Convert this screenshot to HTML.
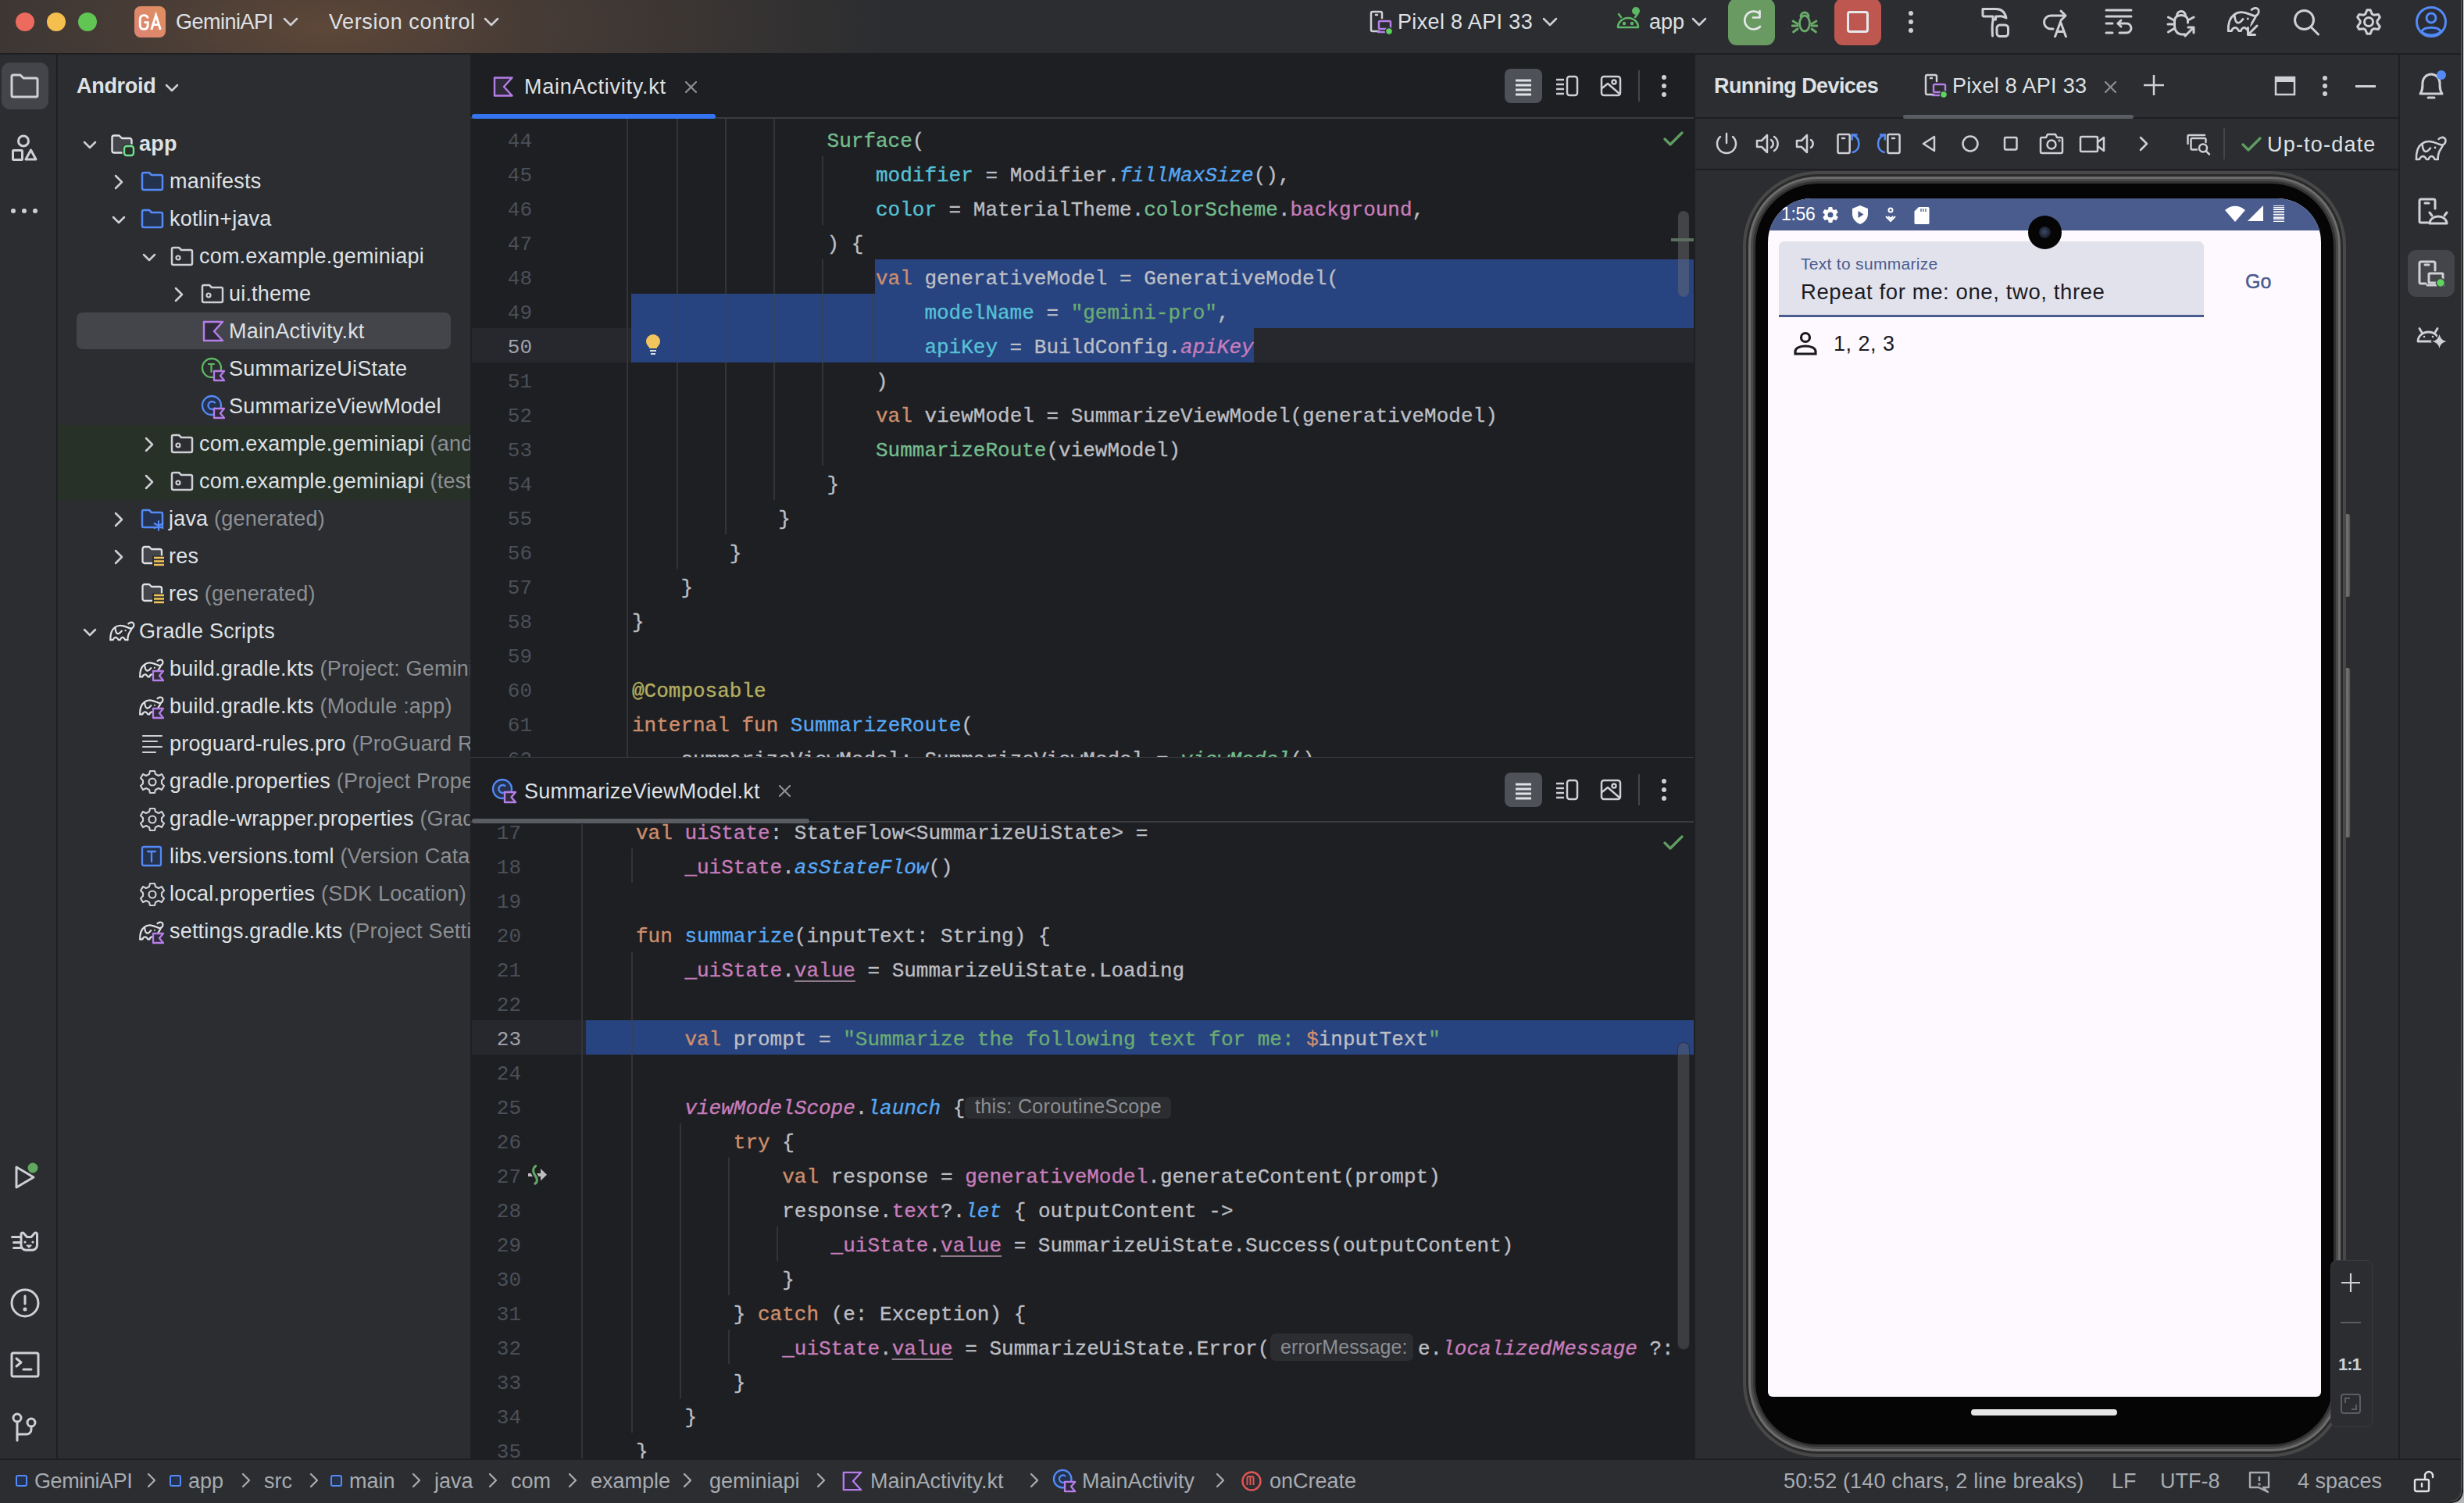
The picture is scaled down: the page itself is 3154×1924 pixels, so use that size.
<!DOCTYPE html><html><head><meta charset="utf-8"><style>html,body{margin:0;padding:0}body{width:3154px;height:1924px;overflow:hidden;position:relative;background:#2b2d30;font-family:"Liberation Sans",sans-serif}.u{text-decoration:underline;text-underline-offset:5px;text-decoration-thickness:2px;text-decoration-color:#8f7a8c}</style></head><body>
<div style="position:absolute;left:0;top:0;width:3154px;height:68px;background:#2b2d30"></div>
<div style="position:absolute;left:0;top:0;width:1300px;height:68px;background:radial-gradient(ellipse 720px 260px at 420px 34px, rgba(110,80,60,0.75) 0%, rgba(95,72,58,0.55) 35%, rgba(43,45,48,0) 100%)"></div>
<div style="position:absolute;left:0px;top:68px;width:3154px;height:2px;background:#1e1f22;"></div>
<div style="position:absolute;left:20px;top:16px;width:24px;height:24px;border-radius:50%;background:#ed6a5e"></div>
<div style="position:absolute;left:60px;top:16px;width:24px;height:24px;border-radius:50%;background:#f4bf4f"></div>
<div style="position:absolute;left:100px;top:16px;width:24px;height:24px;border-radius:50%;background:#61c554"></div>
<div style="position:absolute;left:172px;top:8px;width:40px;height:40px;border-radius:8px;background:linear-gradient(45deg,#dd8374,#e08f5f)"></div>
<svg style="position:absolute;left:0;top:0" width="220" height="60" viewBox="0 0 220 60" fill="none" stroke="#ffffff" stroke-width="2.9" stroke-linecap="butt" stroke-linejoin="miter"><path d="M189.2 23.5 C188.8 20.5 187 19.6 184.2 19.6 C180.6 19.6 179.2 21.8 179.2 25.5 V32 C179.2 35.8 180.6 37.4 184.2 37.4 C187.8 37.4 189.2 35.8 189.2 32 V28.6 H184.4"/><path d="M193.8 38 L199.6 19.4 L205.4 38 M195.8 31.6 H203.4"/></svg>
<div style="position:absolute;left:225px;top:12.44px;height:32.4px;line-height:32.4px;font-size:27px;color:#dfe1e5;font-weight:normal;white-space:pre;font-family:'Liberation Sans', sans-serif;letter-spacing:-0.5px">GeminiAPI</div>
<svg style="position:absolute;left:362px;top:22.0px" width="20" height="12.0" viewBox="-2 -2 20 12.0"><path d="M0 0 L8.0 8.0 L16 0" fill="none" stroke="#ced0d6" stroke-width="2.5" stroke-linecap="round" stroke-linejoin="round"/></svg>
<div style="position:absolute;left:421px;top:12.44px;height:32.4px;line-height:32.4px;font-size:27px;color:#dfe1e5;font-weight:normal;white-space:pre;font-family:'Liberation Sans', sans-serif;letter-spacing:0.6px">Version control</div>
<svg style="position:absolute;left:619px;top:22.0px" width="20" height="12.0" viewBox="-2 -2 20 12.0"><path d="M0 0 L8.0 8.0 L16 0" fill="none" stroke="#ced0d6" stroke-width="2.5" stroke-linecap="round" stroke-linejoin="round"/></svg>
<svg style="position:absolute;left:1753px;top:13px" width="30" height="32" viewBox="0 0 30 32" fill="none" stroke-linecap="round" stroke-linejoin="round"><path d="M12 27 H4 a2 2 0 0 1 -2 -2 V4 a2 2 0 0 1 2 -2 H14 a2 2 0 0 1 2 2 V10" stroke="#ced0d6" stroke-width="2.5"/><path d="M8 6 H10" stroke="#ced0d6" stroke-width="2.5"/><rect x="12" y="14" width="15" height="10" rx="1.5" stroke="#b57ee8" stroke-width="2.5"/><path d="M11 28 H27" stroke="#b57ee8" stroke-width="2.5"/><circle cx="25" cy="27" r="4.5" fill="#5fd35f" stroke="#2b2d30" stroke-width="1.5"/></svg>
<div style="position:absolute;left:1789px;top:12.44px;height:32.4px;line-height:32.4px;font-size:27px;color:#dfe1e5;font-weight:normal;white-space:pre;font-family:'Liberation Sans', sans-serif;letter-spacing:0.35px">Pixel 8 API 33</div>
<svg style="position:absolute;left:1974px;top:22.0px" width="20" height="12.0" viewBox="-2 -2 20 12.0"><path d="M0 0 L8.0 8.0 L16 0" fill="none" stroke="#ced0d6" stroke-width="2.5" stroke-linecap="round" stroke-linejoin="round"/></svg>
<svg style="position:absolute;left:2068px;top:8px" width="32" height="34" viewBox="0 0 32 34" fill="none" stroke="#5fb865" stroke-width="2.5" stroke-linecap="round" stroke-linejoin="round"><path d="M3 27 a13 12 0 0 1 26 0 Z"/><path d="M7 14 L4 10"/><path d="M25 14 L28 10"/><circle cx="11" cy="22" r="1" fill="#5fb865"/><circle cx="21" cy="22" r="1" fill="#5fb865"/><circle cx="26" cy="6" r="5" fill="#5fb865" stroke="none"/></svg>
<div style="position:absolute;left:2111px;top:12.44px;height:32.4px;line-height:32.4px;font-size:27px;color:#dfe1e5;font-weight:normal;white-space:pre;font-family:'Liberation Sans', sans-serif;">app</div>
<svg style="position:absolute;left:2165px;top:22.0px" width="20" height="12.0" viewBox="-2 -2 20 12.0"><path d="M0 0 L8.0 8.0 L16 0" fill="none" stroke="#ced0d6" stroke-width="2.5" stroke-linecap="round" stroke-linejoin="round"/></svg>
<div style="position:absolute;left:2212px;top:-2px;width:60px;height:60px;border-radius:11px;background:#689a62"></div>
<svg style="position:absolute;left:2222px;top:8px" width="40" height="40" viewBox="0 0 40 40" fill="none" stroke="#e8e8ea" stroke-width="2.6" stroke-linecap="round" stroke-linejoin="round"><path d="M30.5 9.5 A11.5 11.5 0 1 0 31 26"/><path d="M22 14.5 H30.5 V6"/></svg>
<svg style="position:absolute;left:2293px;top:11px" width="34" height="34" viewBox="0 0 34 34" fill="none" stroke="#6aab6a" stroke-width="2.8" stroke-linecap="round" stroke-linejoin="round"><ellipse cx="17" cy="19" rx="6.5" ry="10"/><path d="M12 10 a5 5 0 0 1 10 0"/><path d="M2 16 L8 19.5"/><path d="M32 16 L26 19.5"/><path d="M1 22 H8"/><path d="M33 22 H26"/><path d="M2.5 30 L8 26"/><path d="M31.5 30 L26 26"/></svg>
<div style="position:absolute;left:2348px;top:-2px;width:60px;height:60px;border-radius:11px;background:#bd5750"></div>
<div style="position:absolute;left:2364px;top:14px;width:22px;height:22px;border:3px solid #e6e9ec;border-radius:4px"></div>
<div style="position:absolute;left:2443px;top:14px;width:6px;height:6px;border-radius:50%;background:#ced0d6"></div>
<div style="position:absolute;left:2443px;top:25px;width:6px;height:6px;border-radius:50%;background:#ced0d6"></div>
<div style="position:absolute;left:2443px;top:36px;width:6px;height:6px;border-radius:50%;background:#ced0d6"></div>
<svg style="position:absolute;left:2533px;top:8px" width="40" height="40" viewBox="0 0 40 40" stroke="#ced0d6" stroke-width="3" fill="none" stroke-linecap="round" stroke-linejoin="round"><path d="M5 3.5 H22 C29 3.5 33.5 8 35 15 C31.5 13 27.5 12.5 25 13 H21.5 V17 H18 V13 H6.5 a1.5 1.5 0 0 1 -1.5 -1.5 Z"/><path d="M18.5 17 C16.5 22 17 30 17.5 38"/><rect x="23" y="24" width="14.5" height="14.5" rx="4"/></svg>
<svg style="position:absolute;left:2613px;top:8px" width="40" height="40" viewBox="0 0 40 40" stroke="#ced0d6" stroke-width="3" fill="none" stroke-linecap="round" stroke-linejoin="round"><path d="M15 29 H12 a8.5 8.5 0 0 1 0 -17 H30"/><path d="M25 6 L31 12 L25 18"/><path d="M17.5 39 L24.5 20 L31.5 39 M20 32.5 H29"/></svg>
<svg style="position:absolute;left:2692px;top:8px" width="40" height="40" viewBox="0 0 40 40" stroke="#ced0d6" stroke-width="3" fill="none" stroke-linecap="round" stroke-linejoin="round"><path d="M4 5 H36 M4 13 H36 M4 22 H12 M4 34 H12"/><path d="M21 34 H30 a6 6 0 0 0 0 -12 H19"/><path d="M23 18 L19 22 L23 26"/></svg>
<svg style="position:absolute;left:2772px;top:8px" width="40" height="40" viewBox="0 0 40 40" stroke="#ced0d6" stroke-width="3" fill="none" stroke-linecap="round" stroke-linejoin="round"><path d="M25 36 H21 C15 36 11.5 31 11.5 25 V19 C11.5 14 15 11.5 20 11.5 C25 11.5 28.5 14 28.5 19 V21"/><path d="M14.5 12 a5.5 5.5 0 0 1 11 0"/><path d="M3.5 14 L10 17.5 M3 23 H10.5 M3.5 33 L11 28.5 M36 14 L29.5 17.5"/><path d="M25 38 L36 27 M29 27 H36 V34"/></svg>
<svg style="position:absolute;left:2844.2px;top:-1.4px" width="57.2" height="52.0" viewBox="0 0 55 50" fill="none" stroke="#ced0d6" stroke-width="2.69" stroke-linecap="round" stroke-linejoin="round"><path d="M8 39 C7.5 29 11 22 15 19 C19 16 24 15.5 28 16.5 C33 17.5 37 20 40 20.5 C43 21 45.5 18 45.5 15 C45.5 12 43 10.5 40.5 11 C39 11.3 37.5 12 36.6 13"/><path d="M42 20.5 C41 24 38 27 37 30 C35.8 33 35.5 36 35.5 39"/><path d="M8 39 H12 C13 35.5 16 34.5 17.5 35.2 C19 36 20 37 21 39 H23.5 C24.5 35.5 27 34.5 28.5 35.2 C30 36 31 37 31.5 39 H35.5"/><path d="M15.5 19.5 C16 24 17 28.5 19.5 29 C22 29.5 24.5 26.5 26 24.5"/><circle cx="32" cy="24" r="1.4" fill="#ced0d6" stroke="none"/></svg>
<svg style="position:absolute;left:2866px;top:24px" width="30" height="28" viewBox="0 0 30 28" fill="none" stroke-linecap="round" stroke-linejoin="round"><path d="M23 8 L11 20" stroke="#2b2d30" stroke-width="9"/><path d="M23 9 L11.5 20.5 M11.5 11.5 V20.5 H20.5" stroke="#ced0d6" stroke-width="3"/></svg>
<svg style="position:absolute;left:2932px;top:8px" width="40" height="40" viewBox="0 0 40 40" stroke="#ced0d6" stroke-width="3" fill="none" stroke-linecap="round" stroke-linejoin="round"><circle cx="17.5" cy="17.5" r="12"/><path d="M26 26.5 L35.5 36"/></svg>
<svg style="position:absolute;left:3012px;top:8px" width="40" height="40" viewBox="0 0 40 40" stroke="#ced0d6" stroke-width="3" fill="none" stroke-linecap="round" stroke-linejoin="round"><path d="M17.98 4.63 L22.02 4.63 L24.21 9.84 L26.70 11.27 L32.30 10.56 L34.32 14.07 L30.91 18.56 L30.91 21.44 L34.32 25.93 L32.30 29.44 L26.70 28.73 L24.21 30.16 L22.02 35.37 L17.98 35.37 L15.79 30.16 L13.30 28.73 L7.70 29.44 L5.68 25.93 L9.09 21.44 L9.09 18.56 L5.68 14.07 L7.70 10.56 L13.30 11.27 L15.79 9.84 Z"/><circle cx="20" cy="20" r="5.5"/></svg>
<svg style="position:absolute;left:3091px;top:7px" width="42" height="42" viewBox="0 0 42 42" fill="none" stroke-linecap="round"><circle cx="21" cy="21" r="18.5" stroke="#548af7" stroke-width="3"/><circle cx="21" cy="16" r="6" fill="#25324d" stroke="#548af7" stroke-width="3"/><path d="M8.5 33.5 C12 26.5 30 26.5 33.5 33.5 C27 39.5 15 39.5 8.5 33.5 Z" fill="#25324d" stroke="#548af7" stroke-width="3"/></svg>
<div style="position:absolute;left:0px;top:70px;width:72px;height:1798px;background:#2b2d30;"></div>
<div style="position:absolute;left:72px;top:70px;width:2px;height:1798px;background:#1e1f22;"></div>
<div style="position:absolute;left:2px;top:80px;width:60px;height:60px;border-radius:11px;background:#43454a"></div>
<svg style="position:absolute;left:12.0px;top:90.0px" width="40" height="40" viewBox="0 0 40 40" stroke="#ced0d6" stroke-width="3" fill="none" stroke-linecap="round" stroke-linejoin="round"><path d="M3 8 a2 2 0 0 1 2 -2 H14 L18 10 H34 a2 2 0 0 1 2 2 V32 a2 2 0 0 1 -2 2 H5 a2 2 0 0 1 -2 -2 Z"/></svg>
<svg style="position:absolute;left:12.0px;top:171.0px" width="40" height="40" viewBox="0 0 40 40" stroke="#ced0d6" stroke-width="3" fill="none" stroke-linecap="round" stroke-linejoin="round"><circle cx="18" cy="9.5" r="6.5"/><rect x="4.5" y="21.5" width="12" height="12" rx="1"/><path d="M21 33 L27.5 21 L34 33 Z"/></svg>
<div style="position:absolute;left:14px;top:267px;width:6px;height:6px;border-radius:50%;background:#ced0d6"></div>
<div style="position:absolute;left:28px;top:267px;width:6px;height:6px;border-radius:50%;background:#ced0d6"></div>
<div style="position:absolute;left:42px;top:267px;width:6px;height:6px;border-radius:50%;background:#ced0d6"></div>
<svg style="position:absolute;left:12.0px;top:1487.0px" width="40" height="40" viewBox="0 0 40 40" stroke="#ced0d6" stroke-width="3" fill="none" stroke-linecap="round" stroke-linejoin="round"><path d="M9 7 L31 20 L9 33 Z"/><circle cx="30" cy="8" r="6.5" fill="#5fa85e" stroke="none"/></svg>
<svg style="position:absolute;left:12.0px;top:1570.0px" width="40" height="40" viewBox="0 0 40 40" stroke="#ced0d6" stroke-width="3" fill="none" stroke-linecap="round" stroke-linejoin="round"><path d="M15 24 V9.8 a1.8 1.8 0 0 1 3.1 -1.3 L22.5 13.6 H28 L32.4 8.5 a1.8 1.8 0 0 1 3.1 1.3 V24 a6.2 6.2 0 0 1 -6.2 6.2 H21.2 a6.2 6.2 0 0 1 -6.2 -6.2 Z"/><path d="M3.5 13.5 H14 M5.5 20.5 H14 M5.5 27.5 H14"/><circle cx="20" cy="20" r="1.6" fill="#ced0d6" stroke="none"/><circle cx="30" cy="20" r="1.6" fill="#ced0d6" stroke="none"/><path d="M22.3 24.3 H28 L25.15 26.8 Z" fill="#ced0d6" stroke-width="1.5"/></svg>
<svg style="position:absolute;left:12.0px;top:1648.0px" width="40" height="40" viewBox="0 0 40 40" stroke="#ced0d6" stroke-width="3" fill="none" stroke-linecap="round" stroke-linejoin="round"><circle cx="20" cy="20" r="17"/><path d="M20 11 V21"/><circle cx="20" cy="28" r="1" fill="#ced0d6"/></svg>
<svg style="position:absolute;left:12.0px;top:1727.0px" width="40" height="40" viewBox="0 0 40 40" stroke="#ced0d6" stroke-width="3" fill="none" stroke-linecap="round" stroke-linejoin="round"><rect x="3" y="5" width="34" height="30" rx="2"/><path d="M9 12 L15 17 L9 22"/><path d="M18 26 H28"/></svg>
<svg style="position:absolute;left:12.0px;top:1807.0px" width="40" height="40" viewBox="0 0 40 40" stroke="#ced0d6" stroke-width="3" fill="none" stroke-linecap="round" stroke-linejoin="round"><circle cx="10" cy="8" r="5"/><circle cx="28" cy="14" r="5"/><path d="M10 13 V37"/><path d="M10 29 H22 a6 6 0 0 0 6 -6 V19"/></svg>
<div style="position:absolute;left:74px;top:70px;width:528px;height:1798px;background:#2b2d30;"></div>
<div style="position:absolute;left:98px;top:94.44px;height:32.4px;line-height:32.4px;font-size:27px;color:#dfe1e5;font-weight:bold;white-space:pre;font-family:'Liberation Sans', sans-serif;letter-spacing:-0.3px">Android</div>
<svg style="position:absolute;left:211px;top:107px" width="20" height="12" viewBox="0 0 20 12"><path d="M2 2 L9 9 L16 2" fill="none" stroke="#ced0d6" stroke-width="2.5" stroke-linecap="round" stroke-linejoin="round"/></svg>
<div style="position:absolute;left:74px;top:544px;width:528px;height:96px;background:#273128;"></div>
<div style="position:absolute;left:98px;top:400px;width:479px;height:47px;border-radius:8px;background:#43454a"></div>
<svg style="position:absolute;left:106px;top:180px" width="20" height="12" viewBox="0 0 20 12"><path d="M2 2 L9 9 L16 2" fill="none" stroke="#ced0d6" stroke-width="2.5" stroke-linecap="round" stroke-linejoin="round"/></svg>
<svg style="position:absolute;left:140px;top:170px" width="34" height="32" viewBox="0 0 34 32" fill="none" stroke-linecap="butt" stroke-linejoin="round"><path d="M3.5 6 a2.5 2.5 0 0 1 2.5 -2.5 H12.5 L16 7 H26 a2.5 2.5 0 0 1 2.5 2.5 V23 a2.5 2.5 0 0 1 -2.5 2.5 H6 a2.5 2.5 0 0 1 -2.5 -2.5 Z" fill="#43454a"/><path d="M18 25.5 H6 a2.5 2.5 0 0 1 -2.5 -2.5 V6 a2.5 2.5 0 0 1 2.5 -2.5 H12.5 L16 7 H26 a2.5 2.5 0 0 1 2.5 2.5 V16.5" stroke="#dfe1e5" stroke-width="2.4"/><rect x="19" y="17" width="12" height="12" rx="3.2" fill="#263029" stroke="#2b2d30" stroke-width="5"/><rect x="19" y="17" width="12" height="12" rx="3.2" fill="#263029" stroke="#73e08f" stroke-width="2.4"/></svg>
<div style="position:absolute;left:178px;top:168.44px;height:32.4px;line-height:32.4px;font-size:27px;color:#dfe1e5;font-weight:normal;white-space:pre;font-family:'Liberation Sans', sans-serif;letter-spacing:0.2px"><b style="font-weight:bold">app</b></div>
<svg style="position:absolute;left:146px;top:223px" width="12" height="20" viewBox="0 0 12 20"><path d="M2 2 L10 10 L2 18" fill="none" stroke="#ced0d6" stroke-width="2.5" stroke-linecap="round" stroke-linejoin="round"/></svg>
<svg style="position:absolute;left:180px;top:217.0px" width="32" height="32" viewBox="0 0 32 32" fill="none" stroke-linecap="round" stroke-linejoin="round"><path d="M2 6 a2 2 0 0 1 2 -2 H11 L14 7 H26 a2 2 0 0 1 2 2 V24 a2 2 0 0 1 -2 2 H4 a2 2 0 0 1 -2 -2 Z" fill="#25324d" stroke="#548af7" stroke-width="2.5"/></svg>
<div style="position:absolute;left:217px;top:216.44px;height:32.4px;line-height:32.4px;font-size:27px;color:#dfe1e5;font-weight:normal;white-space:pre;font-family:'Liberation Sans', sans-serif;letter-spacing:0.2px">manifests</div>
<svg style="position:absolute;left:143px;top:276px" width="20" height="12" viewBox="0 0 20 12"><path d="M2 2 L9 9 L16 2" fill="none" stroke="#ced0d6" stroke-width="2.5" stroke-linecap="round" stroke-linejoin="round"/></svg>
<svg style="position:absolute;left:180px;top:265.0px" width="32" height="32" viewBox="0 0 32 32" fill="none" stroke-linecap="round" stroke-linejoin="round"><path d="M2 6 a2 2 0 0 1 2 -2 H11 L14 7 H26 a2 2 0 0 1 2 2 V24 a2 2 0 0 1 -2 2 H4 a2 2 0 0 1 -2 -2 Z" fill="#25324d" stroke="#548af7" stroke-width="2.5"/></svg>
<div style="position:absolute;left:217px;top:264.44px;height:32.4px;line-height:32.4px;font-size:27px;color:#dfe1e5;font-weight:normal;white-space:pre;font-family:'Liberation Sans', sans-serif;letter-spacing:0.2px">kotlin+java</div>
<svg style="position:absolute;left:182px;top:324px" width="20" height="12" viewBox="0 0 20 12"><path d="M2 2 L9 9 L16 2" fill="none" stroke="#ced0d6" stroke-width="2.5" stroke-linecap="round" stroke-linejoin="round"/></svg>
<svg style="position:absolute;left:218px;top:313.0px" width="32" height="32" viewBox="0 0 32 32" fill="none" stroke-linecap="round" stroke-linejoin="round"><path d="M2 6 a2 2 0 0 1 2 -2 H11 L14 7 H26 a2 2 0 0 1 2 2 V24 a2 2 0 0 1 -2 2 H4 a2 2 0 0 1 -2 -2 Z" fill="#2b2d30" stroke="#ced0d6" stroke-width="2.5"/><circle cx="10" cy="17" r="2.5" stroke="#ced0d6" stroke-width="2.2"/></svg>
<div style="position:absolute;left:255px;top:312.44px;height:32.4px;line-height:32.4px;font-size:27px;color:#dfe1e5;font-weight:normal;white-space:pre;font-family:'Liberation Sans', sans-serif;letter-spacing:0.2px">com.example.geminiapi</div>
<svg style="position:absolute;left:223px;top:367px" width="12" height="20" viewBox="0 0 12 20"><path d="M2 2 L10 10 L2 18" fill="none" stroke="#ced0d6" stroke-width="2.5" stroke-linecap="round" stroke-linejoin="round"/></svg>
<svg style="position:absolute;left:257px;top:361.0px" width="32" height="32" viewBox="0 0 32 32" fill="none" stroke-linecap="round" stroke-linejoin="round"><path d="M2 6 a2 2 0 0 1 2 -2 H11 L14 7 H26 a2 2 0 0 1 2 2 V24 a2 2 0 0 1 -2 2 H4 a2 2 0 0 1 -2 -2 Z" fill="#2b2d30" stroke="#ced0d6" stroke-width="2.5"/><circle cx="10" cy="17" r="2.5" stroke="#ced0d6" stroke-width="2.2"/></svg>
<div style="position:absolute;left:293px;top:360.44px;height:32.4px;line-height:32.4px;font-size:27px;color:#dfe1e5;font-weight:normal;white-space:pre;font-family:'Liberation Sans', sans-serif;letter-spacing:0.2px">ui.theme</div>
<svg style="position:absolute;left:258px;top:409.0px" width="32" height="32" viewBox="0 0 32 32" fill="none" stroke-linecap="round" stroke-linejoin="round"><path d="M3 3 H27 L16 15 L27 27 H3 Z" fill="#2f2a3a" stroke="#b57ee8" stroke-width="2.5"/></svg>
<div style="position:absolute;left:293px;top:408.44px;height:32.4px;line-height:32.4px;font-size:27px;color:#dfe1e5;font-weight:normal;white-space:pre;font-family:'Liberation Sans', sans-serif;letter-spacing:0.2px">MainActivity.kt</div>
<svg style="position:absolute;left:257px;top:457.0px" width="32" height="32" viewBox="0 0 32 32" fill="none" stroke-linecap="round" stroke-linejoin="round"><circle cx="14" cy="14" r="12" stroke="#5fb865" stroke-width="2.3"/><path d="M10 9 H17 M13.5 9 V19" stroke="#5fb865" stroke-width="2.2"/><path d="M17 18 H30 L25 24 L30 30 H17 Z" fill="#2f2a3a" stroke="#b57ee8" stroke-width="2.3"/></svg>
<div style="position:absolute;left:293px;top:456.44px;height:32.4px;line-height:32.4px;font-size:27px;color:#dfe1e5;font-weight:normal;white-space:pre;font-family:'Liberation Sans', sans-serif;letter-spacing:0.2px">SummarizeUiState</div>
<svg style="position:absolute;left:257px;top:505.0px" width="32" height="32" viewBox="0 0 32 32" fill="none" stroke-linecap="round" stroke-linejoin="round"><circle cx="14" cy="14" r="12" fill="#25324d" stroke="#548af7" stroke-width="2.3"/><path d="M18 10.5 A5 5 0 1 0 18 17.5" stroke="#548af7" stroke-width="2.3"/><path d="M17 18 H30 L25 24 L30 30 H17 Z" fill="#2f2a3a" stroke="#b57ee8" stroke-width="2.3"/></svg>
<div style="position:absolute;left:293px;top:504.44px;height:32.4px;line-height:32.4px;font-size:27px;color:#dfe1e5;font-weight:normal;white-space:pre;font-family:'Liberation Sans', sans-serif;letter-spacing:0.2px">SummarizeViewModel</div>
<svg style="position:absolute;left:185px;top:559px" width="12" height="20" viewBox="0 0 12 20"><path d="M2 2 L10 10 L2 18" fill="none" stroke="#ced0d6" stroke-width="2.5" stroke-linecap="round" stroke-linejoin="round"/></svg>
<svg style="position:absolute;left:218px;top:553.0px" width="32" height="32" viewBox="0 0 32 32" fill="none" stroke-linecap="round" stroke-linejoin="round"><path d="M2 6 a2 2 0 0 1 2 -2 H11 L14 7 H26 a2 2 0 0 1 2 2 V24 a2 2 0 0 1 -2 2 H4 a2 2 0 0 1 -2 -2 Z" fill="#2b2d30" stroke="#ced0d6" stroke-width="2.5"/><circle cx="10" cy="17" r="2.5" stroke="#ced0d6" stroke-width="2.2"/></svg>
<div style="position:absolute;left:255px;top:552.44px;height:32.4px;line-height:32.4px;font-size:27px;color:#dfe1e5;font-weight:normal;white-space:pre;font-family:'Liberation Sans', sans-serif;letter-spacing:0.2px">com.example.geminiapi <span style="color:#8c8f94">(androidTest)</span></div>
<svg style="position:absolute;left:185px;top:607px" width="12" height="20" viewBox="0 0 12 20"><path d="M2 2 L10 10 L2 18" fill="none" stroke="#ced0d6" stroke-width="2.5" stroke-linecap="round" stroke-linejoin="round"/></svg>
<svg style="position:absolute;left:218px;top:601.0px" width="32" height="32" viewBox="0 0 32 32" fill="none" stroke-linecap="round" stroke-linejoin="round"><path d="M2 6 a2 2 0 0 1 2 -2 H11 L14 7 H26 a2 2 0 0 1 2 2 V24 a2 2 0 0 1 -2 2 H4 a2 2 0 0 1 -2 -2 Z" fill="#2b2d30" stroke="#ced0d6" stroke-width="2.5"/><circle cx="10" cy="17" r="2.5" stroke="#ced0d6" stroke-width="2.2"/></svg>
<div style="position:absolute;left:255px;top:600.44px;height:32.4px;line-height:32.4px;font-size:27px;color:#dfe1e5;font-weight:normal;white-space:pre;font-family:'Liberation Sans', sans-serif;letter-spacing:0.2px">com.example.geminiapi <span style="color:#8c8f94">(test)</span></div>
<svg style="position:absolute;left:146px;top:655px" width="12" height="20" viewBox="0 0 12 20"><path d="M2 2 L10 10 L2 18" fill="none" stroke="#ced0d6" stroke-width="2.5" stroke-linecap="round" stroke-linejoin="round"/></svg>
<svg style="position:absolute;left:180px;top:649.0px" width="32" height="32" viewBox="0 0 32 32" fill="none" stroke-linecap="round" stroke-linejoin="round"><path d="M2 6 a2 2 0 0 1 2 -2 H11 L14 7 H26 a2 2 0 0 1 2 2 V24 a2 2 0 0 1 -2 2 H4 a2 2 0 0 1 -2 -2 Z" fill="#25324d" stroke="#548af7" stroke-width="2.5"/><path d="M23 18 V30 M17.5 21 L28.5 27 M17.5 27 L28.5 21" stroke="#548af7" stroke-width="2"/></svg>
<div style="position:absolute;left:216px;top:648.44px;height:32.4px;line-height:32.4px;font-size:27px;color:#dfe1e5;font-weight:normal;white-space:pre;font-family:'Liberation Sans', sans-serif;letter-spacing:0.2px">java <span style="color:#8c8f94">(generated)</span></div>
<svg style="position:absolute;left:146px;top:703px" width="12" height="20" viewBox="0 0 12 20"><path d="M2 2 L10 10 L2 18" fill="none" stroke="#ced0d6" stroke-width="2.5" stroke-linecap="round" stroke-linejoin="round"/></svg>
<svg style="position:absolute;left:180px;top:697.0px" width="32" height="32" viewBox="0 0 32 32" fill="none" stroke-linecap="round" stroke-linejoin="round"><path d="M2.5 5.5 a2.5 2.5 0 0 1 2.5 -2.5 H11 L14 6 H24.5 a2.5 2.5 0 0 1 2.5 2.5 V21.5 a2.5 2.5 0 0 1 -2.5 2.5 H5 a2.5 2.5 0 0 1 -2.5 -2.5 Z" fill="#43454a"/><path d="M15 24 H5 a2.5 2.5 0 0 1 -2.5 -2.5 V5.5 a2.5 2.5 0 0 1 2.5 -2.5 H11 L14 6 H24.5 a2.5 2.5 0 0 1 2.5 2.5 V14" stroke="#dfe1e5" stroke-width="2.3"/><rect x="15" y="14.5" width="15" height="14" fill="#2b2d30"/><path d="M17 17 H30 M17 21.5 H30 M17 26 H30" stroke="#f2c55c" stroke-width="2.4" stroke-linecap="butt"/></svg>
<div style="position:absolute;left:216px;top:696.44px;height:32.4px;line-height:32.4px;font-size:27px;color:#dfe1e5;font-weight:normal;white-space:pre;font-family:'Liberation Sans', sans-serif;letter-spacing:0.2px">res</div>
<svg style="position:absolute;left:180px;top:745.0px" width="32" height="32" viewBox="0 0 32 32" fill="none" stroke-linecap="round" stroke-linejoin="round"><path d="M2.5 5.5 a2.5 2.5 0 0 1 2.5 -2.5 H11 L14 6 H24.5 a2.5 2.5 0 0 1 2.5 2.5 V21.5 a2.5 2.5 0 0 1 -2.5 2.5 H5 a2.5 2.5 0 0 1 -2.5 -2.5 Z" fill="#43454a"/><path d="M15 24 H5 a2.5 2.5 0 0 1 -2.5 -2.5 V5.5 a2.5 2.5 0 0 1 2.5 -2.5 H11 L14 6 H24.5 a2.5 2.5 0 0 1 2.5 2.5 V14" stroke="#dfe1e5" stroke-width="2.3"/><rect x="15" y="14.5" width="15" height="14" fill="#2b2d30"/><path d="M17 17 H30 M17 21.5 H30 M17 26 H30" stroke="#f2c55c" stroke-width="2.4" stroke-linecap="butt"/></svg>
<div style="position:absolute;left:216px;top:744.44px;height:32.4px;line-height:32.4px;font-size:27px;color:#dfe1e5;font-weight:normal;white-space:pre;font-family:'Liberation Sans', sans-serif;letter-spacing:0.2px">res <span style="color:#8c8f94">(generated)</span></div>
<svg style="position:absolute;left:106px;top:804px" width="20" height="12" viewBox="0 0 20 12"><path d="M2 2 L9 9 L16 2" fill="none" stroke="#ced0d6" stroke-width="2.5" stroke-linecap="round" stroke-linejoin="round"/></svg>
<svg style="position:absolute;left:134.6px;top:788.2px" width="44.0" height="40.0" viewBox="0 0 55 50" fill="none" stroke="#dfe1e5" stroke-width="2.75" stroke-linecap="round" stroke-linejoin="round"><path d="M8 39 C7.5 29 11 22 15 19 C19 16 24 15.5 28 16.5 C33 17.5 37 20 40 20.5 C43 21 45.5 18 45.5 15 C45.5 12 43 10.5 40.5 11 C39 11.3 37.5 12 36.6 13"/><path d="M42 20.5 C41 24 38 27 37 30 C35.8 33 35.5 36 35.5 39"/><path d="M8 39 H12 C13 35.5 16 34.5 17.5 35.2 C19 36 20 37 21 39 H23.5 C24.5 35.5 27 34.5 28.5 35.2 C30 36 31 37 31.5 39 H35.5"/><path d="M15.5 19.5 C16 24 17 28.5 19.5 29 C22 29.5 24.5 26.5 26 24.5"/><circle cx="32" cy="24" r="1.4" fill="#dfe1e5" stroke="none"/></svg>
<div style="position:absolute;left:178px;top:792.44px;height:32.4px;line-height:32.4px;font-size:27px;color:#dfe1e5;font-weight:normal;white-space:pre;font-family:'Liberation Sans', sans-serif;letter-spacing:0.2px">Gradle Scripts</div>
<svg style="position:absolute;left:173.2px;top:836.4px" width="42.9" height="39.0" viewBox="0 0 55 50" fill="none" stroke="#dfe1e5" stroke-width="2.82" stroke-linecap="round" stroke-linejoin="round"><path d="M8 39 C7.5 29 11 22 15 19 C19 16 24 15.5 28 16.5 C33 17.5 37 20 40 20.5 C43 21 45.5 18 45.5 15 C45.5 12 43 10.5 40.5 11 C39 11.3 37.5 12 36.6 13"/><path d="M42 20.5 C41 24 38 27 37 30 C35.8 33 35.5 36 35.5 39"/><path d="M8 39 H12 C13 35.5 16 34.5 17.5 35.2 C19 36 20 37 21 39 H23.5 C24.5 35.5 27 34.5 28.5 35.2 C30 36 31 37 31.5 39 H35.5"/><path d="M15.5 19.5 C16 24 17 28.5 19.5 29 C22 29.5 24.5 26.5 26 24.5"/><circle cx="32" cy="24" r="1.4" fill="#dfe1e5" stroke="none"/></svg>
<svg style="position:absolute;left:179px;top:841.0px" width="32" height="32" viewBox="0 0 32 32" fill="none" stroke-linecap="round" stroke-linejoin="round"><path d="M17 18 H30 L25 24 L30 30 H17 Z" fill="#2f2a3a" stroke="#b57ee8" stroke-width="2.3"/></svg>
<div style="position:absolute;left:217px;top:840.44px;height:32.4px;line-height:32.4px;font-size:27px;color:#dfe1e5;font-weight:normal;white-space:pre;font-family:'Liberation Sans', sans-serif;letter-spacing:0.2px">build.gradle.kts <span style="color:#8c8f94">(Project: GeminiAPI)</span></div>
<svg style="position:absolute;left:173.2px;top:884.4px" width="42.9" height="39.0" viewBox="0 0 55 50" fill="none" stroke="#dfe1e5" stroke-width="2.82" stroke-linecap="round" stroke-linejoin="round"><path d="M8 39 C7.5 29 11 22 15 19 C19 16 24 15.5 28 16.5 C33 17.5 37 20 40 20.5 C43 21 45.5 18 45.5 15 C45.5 12 43 10.5 40.5 11 C39 11.3 37.5 12 36.6 13"/><path d="M42 20.5 C41 24 38 27 37 30 C35.8 33 35.5 36 35.5 39"/><path d="M8 39 H12 C13 35.5 16 34.5 17.5 35.2 C19 36 20 37 21 39 H23.5 C24.5 35.5 27 34.5 28.5 35.2 C30 36 31 37 31.5 39 H35.5"/><path d="M15.5 19.5 C16 24 17 28.5 19.5 29 C22 29.5 24.5 26.5 26 24.5"/><circle cx="32" cy="24" r="1.4" fill="#dfe1e5" stroke="none"/></svg>
<svg style="position:absolute;left:179px;top:889.0px" width="32" height="32" viewBox="0 0 32 32" fill="none" stroke-linecap="round" stroke-linejoin="round"><path d="M17 18 H30 L25 24 L30 30 H17 Z" fill="#2f2a3a" stroke="#b57ee8" stroke-width="2.3"/></svg>
<div style="position:absolute;left:217px;top:888.44px;height:32.4px;line-height:32.4px;font-size:27px;color:#dfe1e5;font-weight:normal;white-space:pre;font-family:'Liberation Sans', sans-serif;letter-spacing:0.2px">build.gradle.kts <span style="color:#8c8f94">(Module :app)</span></div>
<svg style="position:absolute;left:179px;top:937.0px" width="32" height="32" viewBox="0 0 32 32" fill="none" stroke-linecap="round" stroke-linejoin="round"><path d="M4 5 H28 M4 12 H22 M4 19 H28 M4 26 H20" stroke="#ced0d6" stroke-width="2.2"/></svg>
<div style="position:absolute;left:217px;top:936.44px;height:32.4px;line-height:32.4px;font-size:27px;color:#dfe1e5;font-weight:normal;white-space:pre;font-family:'Liberation Sans', sans-serif;letter-spacing:0.2px">proguard-rules.pro <span style="color:#8c8f94">(ProGuard Rules for ":app")</span></div>
<svg style="position:absolute;left:179px;top:985.0px" width="32" height="32" viewBox="0 0 32 32" fill="none" stroke-linecap="round" stroke-linejoin="round"><path d="M13 2 H19 L20 6 L24 8 L28 6 L31 11 L28 14 V18 L31 21 L28 26 L24 24 L20 26 L19 30 H13 L12 26 L8 24 L4 26 L1 21 L4 18 V14 L1 11 L4 6 L8 8 L12 6 Z" stroke="#ced0d6" stroke-width="2.2"/><circle cx="16" cy="16" r="4.5" stroke="#ced0d6" stroke-width="2.2"/></svg>
<div style="position:absolute;left:217px;top:984.44px;height:32.4px;line-height:32.4px;font-size:27px;color:#dfe1e5;font-weight:normal;white-space:pre;font-family:'Liberation Sans', sans-serif;letter-spacing:0.2px">gradle.properties <span style="color:#8c8f94">(Project Properties)</span></div>
<svg style="position:absolute;left:179px;top:1033.0px" width="32" height="32" viewBox="0 0 32 32" fill="none" stroke-linecap="round" stroke-linejoin="round"><path d="M13 2 H19 L20 6 L24 8 L28 6 L31 11 L28 14 V18 L31 21 L28 26 L24 24 L20 26 L19 30 H13 L12 26 L8 24 L4 26 L1 21 L4 18 V14 L1 11 L4 6 L8 8 L12 6 Z" stroke="#ced0d6" stroke-width="2.2"/><circle cx="16" cy="16" r="4.5" stroke="#ced0d6" stroke-width="2.2"/></svg>
<div style="position:absolute;left:217px;top:1032.44px;height:32.4px;line-height:32.4px;font-size:27px;color:#dfe1e5;font-weight:normal;white-space:pre;font-family:'Liberation Sans', sans-serif;letter-spacing:0.2px">gradle-wrapper.properties <span style="color:#8c8f94">(Gradle Version)</span></div>
<svg style="position:absolute;left:179px;top:1081.0px" width="32" height="32" viewBox="0 0 32 32" fill="none" stroke-linecap="round" stroke-linejoin="round"><rect x="3" y="3" width="24" height="24" rx="2" fill="#25324d" stroke="#548af7" stroke-width="2.3"/><path d="M10 9 H20 M15 9 V22" stroke="#548af7" stroke-width="2.3"/></svg>
<div style="position:absolute;left:217px;top:1080.44px;height:32.4px;line-height:32.4px;font-size:27px;color:#dfe1e5;font-weight:normal;white-space:pre;font-family:'Liberation Sans', sans-serif;letter-spacing:0.2px">libs.versions.toml <span style="color:#8c8f94">(Version Catalog)</span></div>
<svg style="position:absolute;left:179px;top:1129.0px" width="32" height="32" viewBox="0 0 32 32" fill="none" stroke-linecap="round" stroke-linejoin="round"><path d="M13 2 H19 L20 6 L24 8 L28 6 L31 11 L28 14 V18 L31 21 L28 26 L24 24 L20 26 L19 30 H13 L12 26 L8 24 L4 26 L1 21 L4 18 V14 L1 11 L4 6 L8 8 L12 6 Z" stroke="#ced0d6" stroke-width="2.2"/><circle cx="16" cy="16" r="4.5" stroke="#ced0d6" stroke-width="2.2"/></svg>
<div style="position:absolute;left:217px;top:1128.44px;height:32.4px;line-height:32.4px;font-size:27px;color:#dfe1e5;font-weight:normal;white-space:pre;font-family:'Liberation Sans', sans-serif;letter-spacing:0.2px">local.properties <span style="color:#8c8f94">(SDK Location)</span></div>
<svg style="position:absolute;left:173.2px;top:1172.4px" width="42.9" height="39.0" viewBox="0 0 55 50" fill="none" stroke="#dfe1e5" stroke-width="2.82" stroke-linecap="round" stroke-linejoin="round"><path d="M8 39 C7.5 29 11 22 15 19 C19 16 24 15.5 28 16.5 C33 17.5 37 20 40 20.5 C43 21 45.5 18 45.5 15 C45.5 12 43 10.5 40.5 11 C39 11.3 37.5 12 36.6 13"/><path d="M42 20.5 C41 24 38 27 37 30 C35.8 33 35.5 36 35.5 39"/><path d="M8 39 H12 C13 35.5 16 34.5 17.5 35.2 C19 36 20 37 21 39 H23.5 C24.5 35.5 27 34.5 28.5 35.2 C30 36 31 37 31.5 39 H35.5"/><path d="M15.5 19.5 C16 24 17 28.5 19.5 29 C22 29.5 24.5 26.5 26 24.5"/><circle cx="32" cy="24" r="1.4" fill="#dfe1e5" stroke="none"/></svg>
<svg style="position:absolute;left:179px;top:1177.0px" width="32" height="32" viewBox="0 0 32 32" fill="none" stroke-linecap="round" stroke-linejoin="round"><path d="M17 18 H30 L25 24 L30 30 H17 Z" fill="#2f2a3a" stroke="#b57ee8" stroke-width="2.3"/></svg>
<div style="position:absolute;left:217px;top:1176.44px;height:32.4px;line-height:32.4px;font-size:27px;color:#dfe1e5;font-weight:normal;white-space:pre;font-family:'Liberation Sans', sans-serif;letter-spacing:0.2px">settings.gradle.kts <span style="color:#8c8f94">(Project Settings)</span></div>
<div style="position:absolute;left:602px;top:70px;width:1566px;height:1798px;background:#1e1f22;"></div>
<svg style="position:absolute;left:630px;top:96px" width="30" height="30" viewBox="0 0 30 30" fill="none" stroke-linejoin="round"><path d="M3 3.5 H25.5 L15 15 L25.5 26.5 H3 Z" fill="#2f2a3a" stroke="#b57ee8" stroke-width="2.4"/></svg>
<div style="position:absolute;left:671px;top:95.44px;height:32.4px;line-height:32.4px;font-size:27px;color:#dfe1e5;font-weight:normal;white-space:pre;font-family:'Liberation Sans', sans-serif;letter-spacing:0.75px">MainActivity.kt</div>
<svg style="position:absolute;left:877px;top:103.5px" width="15" height="15" viewBox="0 0 15 15"><path d="M1 1 L14 14 M14 1 L1 14" stroke="#8c8f94" stroke-width="2.2" stroke-linecap="round"/></svg>
<div style="position:absolute;left:602px;top:150px;width:1566px;height:2px;background:#393b40;"></div>
<div style="position:absolute;left:604px;top:146px;width:312px;height:6px;border-radius:3px;background:#3574f0"></div>
<div style="position:absolute;left:1926px;top:88px;width:48px;height:44px;border-radius:8px;background:#4e5157"></div>
<svg style="position:absolute;left:1930px;top:90px" width="40" height="40" viewBox="0 0 40 40" stroke="#dfe1e5" stroke-width="3" fill="none" stroke-linecap="butt"><path d="M10 13 H30 M10 19 H30 M10 25 H30 M10 31 H30"/></svg>
<svg style="position:absolute;left:1986px;top:90px" width="40" height="40" viewBox="0 0 40 40" stroke="#ced0d6" stroke-width="2.5" fill="none"><path d="M6 12 H16 M6 18 H16 M6 24 H16 M6 30 H16"/><rect x="20" y="8" width="13" height="24" rx="3"/></svg>
<svg style="position:absolute;left:2042px;top:90px" width="40" height="40" viewBox="0 0 40 40" stroke="#ced0d6" stroke-width="2.5" fill="none" stroke-linejoin="round"><rect x="8" y="8" width="24" height="24" rx="3"/><circle cx="24" cy="15" r="2.5"/><path d="M8.5 23 L16 17 L31 30"/></svg>
<div style="position:absolute;left:2097px;top:90px;width:2px;height:40px;background:#43454a;"></div>
<div style="position:absolute;left:2127px;top:96px;width:6px;height:6px;border-radius:50%;background:#ced0d6"></div>
<div style="position:absolute;left:2127px;top:107px;width:6px;height:6px;border-radius:50%;background:#ced0d6"></div>
<div style="position:absolute;left:2127px;top:118px;width:6px;height:6px;border-radius:50%;background:#ced0d6"></div>
<div style="position:absolute;left:604px;top:420px;width:1564px;height:44px;background:#26282e;"></div>
<div style="position:absolute;left:1120.0px;top:332px;width:1048.0px;height:44px;background:#274380;"></div>
<div style="position:absolute;left:808px;top:376px;width:1360px;height:44px;background:#274380;"></div>
<div style="position:absolute;left:808px;top:420px;width:796.5999999999999px;height:44px;background:#274380;"></div>
<div style="position:absolute;left:802px;top:152px;width:2px;height:817px;background:#313438;"></div>
<div style="position:absolute;left:866px;top:152px;width:2px;height:576px;background:#313438;"></div>
<div style="position:absolute;left:928px;top:152px;width:2px;height:532px;background:#313438;"></div>
<div style="position:absolute;left:990px;top:152px;width:2px;height:488px;background:#313438;"></div>
<div style="position:absolute;left:1052px;top:200px;width:2px;height:88px;background:#313438;"></div>
<div style="position:absolute;left:1052px;top:332px;width:2px;height:264px;background:#313438;"></div>
<div style="position:absolute;left:866px;top:376px;width:2px;height:88px;background:#34415f;"></div>
<div style="position:absolute;left:928px;top:376px;width:2px;height:88px;background:#34415f;"></div>
<div style="position:absolute;left:990px;top:376px;width:2px;height:88px;background:#34415f;"></div>
<div style="position:absolute;left:1052px;top:376px;width:2px;height:88px;background:#34415f;"></div>
<div style="position:absolute;left:1116px;top:376px;width:2px;height:88px;background:#34415f;"></div>
<div style="position:absolute;left:621px;width:60px;text-align:right;top:159px;height:44px;line-height:44px;font-family:'Liberation Mono', monospace;font-size:26px;color:#4b5059">44</div>
<div style="position:absolute;left:621px;width:60px;text-align:right;top:203px;height:44px;line-height:44px;font-family:'Liberation Mono', monospace;font-size:26px;color:#4b5059">45</div>
<div style="position:absolute;left:621px;width:60px;text-align:right;top:247px;height:44px;line-height:44px;font-family:'Liberation Mono', monospace;font-size:26px;color:#4b5059">46</div>
<div style="position:absolute;left:621px;width:60px;text-align:right;top:291px;height:44px;line-height:44px;font-family:'Liberation Mono', monospace;font-size:26px;color:#4b5059">47</div>
<div style="position:absolute;left:621px;width:60px;text-align:right;top:335px;height:44px;line-height:44px;font-family:'Liberation Mono', monospace;font-size:26px;color:#4b5059">48</div>
<div style="position:absolute;left:621px;width:60px;text-align:right;top:379px;height:44px;line-height:44px;font-family:'Liberation Mono', monospace;font-size:26px;color:#4b5059">49</div>
<div style="position:absolute;left:621px;width:60px;text-align:right;top:423px;height:44px;line-height:44px;font-family:'Liberation Mono', monospace;font-size:26px;color:#a1a3ab">50</div>
<div style="position:absolute;left:621px;width:60px;text-align:right;top:467px;height:44px;line-height:44px;font-family:'Liberation Mono', monospace;font-size:26px;color:#4b5059">51</div>
<div style="position:absolute;left:621px;width:60px;text-align:right;top:511px;height:44px;line-height:44px;font-family:'Liberation Mono', monospace;font-size:26px;color:#4b5059">52</div>
<div style="position:absolute;left:621px;width:60px;text-align:right;top:555px;height:44px;line-height:44px;font-family:'Liberation Mono', monospace;font-size:26px;color:#4b5059">53</div>
<div style="position:absolute;left:621px;width:60px;text-align:right;top:599px;height:44px;line-height:44px;font-family:'Liberation Mono', monospace;font-size:26px;color:#4b5059">54</div>
<div style="position:absolute;left:621px;width:60px;text-align:right;top:643px;height:44px;line-height:44px;font-family:'Liberation Mono', monospace;font-size:26px;color:#4b5059">55</div>
<div style="position:absolute;left:621px;width:60px;text-align:right;top:687px;height:44px;line-height:44px;font-family:'Liberation Mono', monospace;font-size:26px;color:#4b5059">56</div>
<div style="position:absolute;left:621px;width:60px;text-align:right;top:731px;height:44px;line-height:44px;font-family:'Liberation Mono', monospace;font-size:26px;color:#4b5059">57</div>
<div style="position:absolute;left:621px;width:60px;text-align:right;top:775px;height:44px;line-height:44px;font-family:'Liberation Mono', monospace;font-size:26px;color:#4b5059">58</div>
<div style="position:absolute;left:621px;width:60px;text-align:right;top:819px;height:44px;line-height:44px;font-family:'Liberation Mono', monospace;font-size:26px;color:#4b5059">59</div>
<div style="position:absolute;left:621px;width:60px;text-align:right;top:863px;height:44px;line-height:44px;font-family:'Liberation Mono', monospace;font-size:26px;color:#4b5059">60</div>
<div style="position:absolute;left:621px;width:60px;text-align:right;top:907px;height:44px;line-height:44px;font-family:'Liberation Mono', monospace;font-size:26px;color:#4b5059">61</div>
<div style="position:absolute;left:621px;width:60px;text-align:right;top:951px;height:44px;line-height:44px;font-family:'Liberation Mono', monospace;font-size:26px;color:#4b5059">62</div>
<div style="position:absolute;left:1058.6px;top:159px;height:44px;line-height:44px;font-family:'Liberation Mono', monospace;font-size:26px;white-space:pre;color:#bcbec4;-webkit-text-stroke:0.35px currentColor"><span style="color:#73bd8e;">Surface</span><span style="color:#bcbec4;">(</span></div>
<div style="position:absolute;left:1121.0px;top:203px;height:44px;line-height:44px;font-family:'Liberation Mono', monospace;font-size:26px;white-space:pre;color:#bcbec4;-webkit-text-stroke:0.35px currentColor"><span style="color:#56c1d6;">modifier</span><span style="color:#bcbec4;"> = Modifier.</span><span style="color:#56a8f5;font-style:italic;">fillMaxSize</span><span style="color:#bcbec4;">(),</span></div>
<div style="position:absolute;left:1121.0px;top:247px;height:44px;line-height:44px;font-family:'Liberation Mono', monospace;font-size:26px;white-space:pre;color:#bcbec4;-webkit-text-stroke:0.35px currentColor"><span style="color:#56c1d6;">color</span><span style="color:#bcbec4;"> = MaterialTheme.</span><span style="color:#73bd8e;">colorScheme</span><span style="color:#bcbec4;">.</span><span style="color:#c77dbb;">background</span><span style="color:#bcbec4;">,</span></div>
<div style="position:absolute;left:1058.6px;top:291px;height:44px;line-height:44px;font-family:'Liberation Mono', monospace;font-size:26px;white-space:pre;color:#bcbec4;-webkit-text-stroke:0.35px currentColor"><span style="color:#bcbec4;">) {</span></div>
<div style="position:absolute;left:1121.0px;top:335px;height:44px;line-height:44px;font-family:'Liberation Mono', monospace;font-size:26px;white-space:pre;color:#bcbec4;-webkit-text-stroke:0.35px currentColor"><span style="color:#cf8e6d;">val</span><span style="color:#bcbec4;"> generativeModel = GenerativeModel(</span></div>
<div style="position:absolute;left:1183.4px;top:379px;height:44px;line-height:44px;font-family:'Liberation Mono', monospace;font-size:26px;white-space:pre;color:#bcbec4;-webkit-text-stroke:0.35px currentColor"><span style="color:#56c1d6;">modelName</span><span style="color:#bcbec4;"> = </span><span style="color:#6aab73;">&quot;gemini-pro&quot;</span><span style="color:#bcbec4;">,</span></div>
<div style="position:absolute;left:1183.4px;top:423px;height:44px;line-height:44px;font-family:'Liberation Mono', monospace;font-size:26px;white-space:pre;color:#bcbec4;-webkit-text-stroke:0.35px currentColor"><span style="color:#56c1d6;">apiKey</span><span style="color:#bcbec4;"> = BuildConfig.</span><span style="color:#c77dbb;font-style:italic;">apiKey</span></div>
<div style="position:absolute;left:1121.0px;top:467px;height:44px;line-height:44px;font-family:'Liberation Mono', monospace;font-size:26px;white-space:pre;color:#bcbec4;-webkit-text-stroke:0.35px currentColor"><span style="color:#bcbec4;">)</span></div>
<div style="position:absolute;left:1121.0px;top:511px;height:44px;line-height:44px;font-family:'Liberation Mono', monospace;font-size:26px;white-space:pre;color:#bcbec4;-webkit-text-stroke:0.35px currentColor"><span style="color:#cf8e6d;">val</span><span style="color:#bcbec4;"> viewModel = SummarizeViewModel(generativeModel)</span></div>
<div style="position:absolute;left:1121.0px;top:555px;height:44px;line-height:44px;font-family:'Liberation Mono', monospace;font-size:26px;white-space:pre;color:#bcbec4;-webkit-text-stroke:0.35px currentColor"><span style="color:#73bd8e;">SummarizeRoute</span><span style="color:#bcbec4;">(viewModel)</span></div>
<div style="position:absolute;left:1058.6px;top:599px;height:44px;line-height:44px;font-family:'Liberation Mono', monospace;font-size:26px;white-space:pre;color:#bcbec4;-webkit-text-stroke:0.35px currentColor"><span style="color:#bcbec4;">}</span></div>
<div style="position:absolute;left:996.2px;top:643px;height:44px;line-height:44px;font-family:'Liberation Mono', monospace;font-size:26px;white-space:pre;color:#bcbec4;-webkit-text-stroke:0.35px currentColor"><span style="color:#bcbec4;">}</span></div>
<div style="position:absolute;left:933.8px;top:687px;height:44px;line-height:44px;font-family:'Liberation Mono', monospace;font-size:26px;white-space:pre;color:#bcbec4;-webkit-text-stroke:0.35px currentColor"><span style="color:#bcbec4;">}</span></div>
<div style="position:absolute;left:871.4px;top:731px;height:44px;line-height:44px;font-family:'Liberation Mono', monospace;font-size:26px;white-space:pre;color:#bcbec4;-webkit-text-stroke:0.35px currentColor"><span style="color:#bcbec4;">}</span></div>
<div style="position:absolute;left:809.0px;top:775px;height:44px;line-height:44px;font-family:'Liberation Mono', monospace;font-size:26px;white-space:pre;color:#bcbec4;-webkit-text-stroke:0.35px currentColor"><span style="color:#bcbec4;">}</span></div>
<div style="position:absolute;left:809.0px;top:863px;height:44px;line-height:44px;font-family:'Liberation Mono', monospace;font-size:26px;white-space:pre;color:#bcbec4;-webkit-text-stroke:0.35px currentColor"><span style="color:#b3ae60;">@Composable</span></div>
<div style="position:absolute;left:809.0px;top:907px;height:44px;line-height:44px;font-family:'Liberation Mono', monospace;font-size:26px;white-space:pre;color:#bcbec4;-webkit-text-stroke:0.35px currentColor"><span style="color:#cf8e6d;">internal fun</span><span style="color:#bcbec4;"> </span><span style="color:#56a8f5;">SummarizeRoute</span><span style="color:#bcbec4;">(</span></div>
<div style="position:absolute;left:871.4px;top:951px;height:44px;line-height:44px;font-family:'Liberation Mono', monospace;font-size:26px;white-space:pre;color:#bcbec4;-webkit-text-stroke:0.35px currentColor"><span style="color:#bcbec4;">summarizeViewModel: SummarizeViewModel = </span><span style="color:#73bd8e;font-style:italic;">viewModel</span><span style="color:#bcbec4;">()</span></div>
<svg style="position:absolute;left:819px;top:424px" width="34" height="34" viewBox="0 0 34 34"><circle cx="17" cy="13" r="9" fill="#f2c55c"/><path d="M12 19 H22 V22 H12 Z" fill="#f2c55c"/><path d="M13 25 H21 M14 29 H20" stroke="#dfe1e5" stroke-width="2.2"/></svg>
<svg style="position:absolute;left:2129px;top:167px" width="26" height="22" viewBox="0 0 26 22"><path d="M2 11 L9 18 L24 3" fill="none" stroke="#5f9e62" stroke-width="3.2" stroke-linecap="round" stroke-linejoin="round"/></svg>
<div style="position:absolute;left:2148px;top:270px;width:14px;height:110px;border-radius:7px;background:rgba(110,113,120,0.45)"></div>
<div style="position:absolute;left:2139px;top:305px;width:29px;height:4px;background:#5c6e5f;"></div>
<div style="position:absolute;left:602px;top:969px;width:1566px;height:1px;background:#393b40;"></div>
<div style="position:absolute;left:602px;top:970px;width:1566px;height:82px;background:#1e1f22;"></div>
<svg style="position:absolute;left:629px;top:996px" width="34" height="34" viewBox="0 0 34 34" fill="none" stroke-linejoin="round"><circle cx="14" cy="14" r="12" fill="#25324d" stroke="#548af7" stroke-width="2.4"/><path d="M18 10.5 A5 5 0 1 0 18 17.5" stroke="#548af7" stroke-width="2.4"/><path d="M17 18 H31 L25.5 24.5 L31 31 H17 Z" fill="#2f2a3a" stroke="#b57ee8" stroke-width="2.4"/></svg>
<div style="position:absolute;left:671px;top:997.44px;height:32.4px;line-height:32.4px;font-size:27px;color:#dfe1e5;font-weight:normal;white-space:pre;font-family:'Liberation Sans', sans-serif;letter-spacing:0.25px">SummarizeViewModel.kt</div>
<svg style="position:absolute;left:997px;top:1004.5px" width="15" height="15" viewBox="0 0 15 15"><path d="M1 1 L14 14 M14 1 L1 14" stroke="#8c8f94" stroke-width="2.2" stroke-linecap="round"/></svg>
<div style="position:absolute;left:602px;top:1051px;width:1566px;height:2px;background:#393b40;"></div>
<div style="position:absolute;left:604px;top:1048px;width:432px;height:6px;border-radius:3px;background:#5a5d63"></div>
<div style="position:absolute;left:1926px;top:989px;width:48px;height:44px;border-radius:8px;background:#4e5157"></div>
<svg style="position:absolute;left:1930px;top:991px" width="40" height="40" viewBox="0 0 40 40" stroke="#dfe1e5" stroke-width="3" fill="none" stroke-linecap="butt"><path d="M10 13 H30 M10 19 H30 M10 25 H30 M10 31 H30"/></svg>
<svg style="position:absolute;left:1986px;top:991px" width="40" height="40" viewBox="0 0 40 40" stroke="#ced0d6" stroke-width="2.5" fill="none"><path d="M6 12 H16 M6 18 H16 M6 24 H16 M6 30 H16"/><rect x="20" y="8" width="13" height="24" rx="3"/></svg>
<svg style="position:absolute;left:2042px;top:991px" width="40" height="40" viewBox="0 0 40 40" stroke="#ced0d6" stroke-width="2.5" fill="none" stroke-linejoin="round"><rect x="8" y="8" width="24" height="24" rx="3"/><circle cx="24" cy="15" r="2.5"/><path d="M8.5 23 L16 17 L31 30"/></svg>
<div style="position:absolute;left:2097px;top:991px;width:2px;height:40px;background:#43454a;"></div>
<div style="position:absolute;left:2127px;top:997px;width:6px;height:6px;border-radius:50%;background:#ced0d6"></div>
<div style="position:absolute;left:2127px;top:1008px;width:6px;height:6px;border-radius:50%;background:#ced0d6"></div>
<div style="position:absolute;left:2127px;top:1019px;width:6px;height:6px;border-radius:50%;background:#ced0d6"></div>
<div style="position:absolute;left:604px;top:1306px;width:1564px;height:44px;background:#26282e;"></div>
<div style="position:absolute;left:750px;top:1306px;width:1418px;height:44px;background:#274380;"></div>
<div style="position:absolute;left:744px;top:1053px;width:2px;height:815px;background:#313438;"></div>
<div style="position:absolute;left:808px;top:1086px;width:2px;height:44px;background:#313438;"></div>
<div style="position:absolute;left:808px;top:1218px;width:2px;height:616px;background:#313438;"></div>
<div style="position:absolute;left:870px;top:1438px;width:2px;height:352px;background:#313438;"></div>
<div style="position:absolute;left:932px;top:1482px;width:2px;height:176px;background:#313438;"></div>
<div style="position:absolute;left:932px;top:1702px;width:2px;height:44px;background:#313438;"></div>
<div style="position:absolute;left:994px;top:1570px;width:2px;height:44px;background:#313438;"></div>
<div style="position:absolute;left:808px;top:1306px;width:2px;height:44px;background:#34415f;"></div>
<div style="position:absolute;left:607px;width:60px;text-align:right;top:1045px;height:44px;line-height:44px;font-family:'Liberation Mono', monospace;font-size:26px;color:#4b5059">17</div>
<div style="position:absolute;left:607px;width:60px;text-align:right;top:1089px;height:44px;line-height:44px;font-family:'Liberation Mono', monospace;font-size:26px;color:#4b5059">18</div>
<div style="position:absolute;left:607px;width:60px;text-align:right;top:1133px;height:44px;line-height:44px;font-family:'Liberation Mono', monospace;font-size:26px;color:#4b5059">19</div>
<div style="position:absolute;left:607px;width:60px;text-align:right;top:1177px;height:44px;line-height:44px;font-family:'Liberation Mono', monospace;font-size:26px;color:#4b5059">20</div>
<div style="position:absolute;left:607px;width:60px;text-align:right;top:1221px;height:44px;line-height:44px;font-family:'Liberation Mono', monospace;font-size:26px;color:#4b5059">21</div>
<div style="position:absolute;left:607px;width:60px;text-align:right;top:1265px;height:44px;line-height:44px;font-family:'Liberation Mono', monospace;font-size:26px;color:#4b5059">22</div>
<div style="position:absolute;left:607px;width:60px;text-align:right;top:1309px;height:44px;line-height:44px;font-family:'Liberation Mono', monospace;font-size:26px;color:#a1a3ab">23</div>
<div style="position:absolute;left:607px;width:60px;text-align:right;top:1353px;height:44px;line-height:44px;font-family:'Liberation Mono', monospace;font-size:26px;color:#4b5059">24</div>
<div style="position:absolute;left:607px;width:60px;text-align:right;top:1397px;height:44px;line-height:44px;font-family:'Liberation Mono', monospace;font-size:26px;color:#4b5059">25</div>
<div style="position:absolute;left:607px;width:60px;text-align:right;top:1441px;height:44px;line-height:44px;font-family:'Liberation Mono', monospace;font-size:26px;color:#4b5059">26</div>
<div style="position:absolute;left:607px;width:60px;text-align:right;top:1485px;height:44px;line-height:44px;font-family:'Liberation Mono', monospace;font-size:26px;color:#4b5059">27</div>
<div style="position:absolute;left:607px;width:60px;text-align:right;top:1529px;height:44px;line-height:44px;font-family:'Liberation Mono', monospace;font-size:26px;color:#4b5059">28</div>
<div style="position:absolute;left:607px;width:60px;text-align:right;top:1573px;height:44px;line-height:44px;font-family:'Liberation Mono', monospace;font-size:26px;color:#4b5059">29</div>
<div style="position:absolute;left:607px;width:60px;text-align:right;top:1617px;height:44px;line-height:44px;font-family:'Liberation Mono', monospace;font-size:26px;color:#4b5059">30</div>
<div style="position:absolute;left:607px;width:60px;text-align:right;top:1661px;height:44px;line-height:44px;font-family:'Liberation Mono', monospace;font-size:26px;color:#4b5059">31</div>
<div style="position:absolute;left:607px;width:60px;text-align:right;top:1705px;height:44px;line-height:44px;font-family:'Liberation Mono', monospace;font-size:26px;color:#4b5059">32</div>
<div style="position:absolute;left:607px;width:60px;text-align:right;top:1749px;height:44px;line-height:44px;font-family:'Liberation Mono', monospace;font-size:26px;color:#4b5059">33</div>
<div style="position:absolute;left:607px;width:60px;text-align:right;top:1793px;height:44px;line-height:44px;font-family:'Liberation Mono', monospace;font-size:26px;color:#4b5059">34</div>
<div style="position:absolute;left:607px;width:60px;text-align:right;top:1837px;height:44px;line-height:44px;font-family:'Liberation Mono', monospace;font-size:26px;color:#4b5059">35</div>
<div style="position:absolute;left:814.0px;top:1045px;height:44px;line-height:44px;font-family:'Liberation Mono', monospace;font-size:26px;white-space:pre;color:#bcbec4;-webkit-text-stroke:0.35px currentColor"><span style="color:#cf8e6d;">val</span><span style="color:#bcbec4;"> </span><span style="color:#c77dbb;">uiState</span><span style="color:#bcbec4;">: StateFlow&lt;SummarizeUiState&gt; =</span></div>
<div style="position:absolute;left:876.4px;top:1089px;height:44px;line-height:44px;font-family:'Liberation Mono', monospace;font-size:26px;white-space:pre;color:#bcbec4;-webkit-text-stroke:0.35px currentColor"><span style="color:#c77dbb;">_uiState</span><span style="color:#bcbec4;">.</span><span style="color:#56a8f5;font-style:italic;">asStateFlow</span><span style="color:#bcbec4;">()</span></div>
<div style="position:absolute;left:814.0px;top:1177px;height:44px;line-height:44px;font-family:'Liberation Mono', monospace;font-size:26px;white-space:pre;color:#bcbec4;-webkit-text-stroke:0.35px currentColor"><span style="color:#cf8e6d;">fun</span><span style="color:#bcbec4;"> </span><span style="color:#56a8f5;">summarize</span><span style="color:#bcbec4;">(inputText: String) {</span></div>
<div style="position:absolute;left:876.4px;top:1221px;height:44px;line-height:44px;font-family:'Liberation Mono', monospace;font-size:26px;white-space:pre;color:#bcbec4;-webkit-text-stroke:0.35px currentColor"><span style="color:#c77dbb;">_uiState</span><span style="color:#bcbec4;">.</span><span class="u" style="color:#c77dbb;">value</span><span style="color:#bcbec4;"> = SummarizeUiState.Loading</span></div>
<div style="position:absolute;left:876.4px;top:1309px;height:44px;line-height:44px;font-family:'Liberation Mono', monospace;font-size:26px;white-space:pre;color:#bcbec4;-webkit-text-stroke:0.35px currentColor"><span style="color:#cf8e6d;">val</span><span style="color:#bcbec4;"> prompt = </span><span style="color:#6aab73;">&quot;Summarize the following text for me: </span><span style="color:#cf8e6d;">$</span><span style="color:#bcbec4;">inputText</span><span style="color:#6aab73;">&quot;</span></div>
<div style="position:absolute;left:876.4px;top:1397px;height:44px;line-height:44px;font-family:'Liberation Mono', monospace;font-size:26px;white-space:pre;color:#bcbec4;-webkit-text-stroke:0.35px currentColor"><span style="color:#c77dbb;font-style:italic;">viewModelScope</span><span style="color:#bcbec4;">.</span><span style="color:#56a8f5;font-style:italic;">launch</span><span style="color:#bcbec4;"> {</span></div>
<div style="position:absolute;left:938.8px;top:1441px;height:44px;line-height:44px;font-family:'Liberation Mono', monospace;font-size:26px;white-space:pre;color:#bcbec4;-webkit-text-stroke:0.35px currentColor"><span style="color:#cf8e6d;">try</span><span style="color:#bcbec4;"> {</span></div>
<div style="position:absolute;left:1001.2px;top:1485px;height:44px;line-height:44px;font-family:'Liberation Mono', monospace;font-size:26px;white-space:pre;color:#bcbec4;-webkit-text-stroke:0.35px currentColor"><span style="color:#cf8e6d;">val</span><span style="color:#bcbec4;"> response = </span><span style="color:#c77dbb;">generativeModel</span><span style="color:#bcbec4;">.generateContent(prompt)</span></div>
<div style="position:absolute;left:1001.2px;top:1529px;height:44px;line-height:44px;font-family:'Liberation Mono', monospace;font-size:26px;white-space:pre;color:#bcbec4;-webkit-text-stroke:0.35px currentColor"><span style="color:#bcbec4;">response.</span><span style="color:#c77dbb;">text</span><span style="color:#bcbec4;">?.</span><span style="color:#56a8f5;font-style:italic;">let</span><span style="color:#bcbec4;"> { outputContent -&gt;</span></div>
<div style="position:absolute;left:1063.6px;top:1573px;height:44px;line-height:44px;font-family:'Liberation Mono', monospace;font-size:26px;white-space:pre;color:#bcbec4;-webkit-text-stroke:0.35px currentColor"><span style="color:#c77dbb;">_uiState</span><span style="color:#bcbec4;">.</span><span class="u" style="color:#c77dbb;">value</span><span style="color:#bcbec4;"> = SummarizeUiState.Success(outputContent)</span></div>
<div style="position:absolute;left:1001.2px;top:1617px;height:44px;line-height:44px;font-family:'Liberation Mono', monospace;font-size:26px;white-space:pre;color:#bcbec4;-webkit-text-stroke:0.35px currentColor"><span style="color:#bcbec4;">}</span></div>
<div style="position:absolute;left:938.8px;top:1661px;height:44px;line-height:44px;font-family:'Liberation Mono', monospace;font-size:26px;white-space:pre;color:#bcbec4;-webkit-text-stroke:0.35px currentColor"><span style="color:#bcbec4;">} </span><span style="color:#cf8e6d;">catch</span><span style="color:#bcbec4;"> (e: Exception) {</span></div>
<div style="position:absolute;left:1001.2px;top:1705px;height:44px;line-height:44px;font-family:'Liberation Mono', monospace;font-size:26px;white-space:pre;color:#bcbec4;-webkit-text-stroke:0.35px currentColor"><span style="color:#c77dbb;">_uiState</span><span style="color:#bcbec4;">.</span><span class="u" style="color:#c77dbb;">value</span><span style="color:#bcbec4;"> = SummarizeUiState.Error(</span></div>
<div style="position:absolute;left:938.8px;top:1749px;height:44px;line-height:44px;font-family:'Liberation Mono', monospace;font-size:26px;white-space:pre;color:#bcbec4;-webkit-text-stroke:0.35px currentColor"><span style="color:#bcbec4;">}</span></div>
<div style="position:absolute;left:876.4px;top:1793px;height:44px;line-height:44px;font-family:'Liberation Mono', monospace;font-size:26px;white-space:pre;color:#bcbec4;-webkit-text-stroke:0.35px currentColor"><span style="color:#bcbec4;">}</span></div>
<div style="position:absolute;left:814.0px;top:1837px;height:44px;line-height:44px;font-family:'Liberation Mono', monospace;font-size:26px;white-space:pre;color:#bcbec4;-webkit-text-stroke:0.35px currentColor"><span style="color:#bcbec4;">}</span></div>
<div style="position:absolute;left:1815.0px;top:1705px;height:44px;line-height:44px;font-family:'Liberation Mono', monospace;font-size:26px;white-space:pre;color:#bcbec4;-webkit-text-stroke:0.35px currentColor"><span style="color:#bcbec4;">e.</span><span style="color:#c77dbb;font-style:italic;">localizedMessage</span><span style="color:#bcbec4;"> ?:</span></div>
<div style="position:absolute;left:1235px;top:1404px;width:264px;height:28px;border-radius:7px;background:#2b2d30"></div>
<div style="position:absolute;left:1248px;top:1401.34px;height:30.0px;line-height:30.0px;font-size:25px;color:#8b8e94;font-weight:normal;white-space:pre;font-family:'Liberation Sans', sans-serif;letter-spacing:0.35px">this: CoroutineScope</div>
<div style="position:absolute;left:1626px;top:1707px;width:183px;height:35px;border-radius:7px;background:#2b2d30"></div>
<div style="position:absolute;left:1639px;top:1709.34px;height:30.0px;line-height:30.0px;font-size:25px;color:#8b8e94;font-weight:normal;white-space:pre;font-family:'Liberation Sans', sans-serif;letter-spacing:0.1px">errorMessage:</div>
<svg style="position:absolute;left:2129px;top:1068px" width="26" height="22" viewBox="0 0 26 22"><path d="M2 11 L9 18 L24 3" fill="none" stroke="#5f9e62" stroke-width="3.2" stroke-linecap="round" stroke-linejoin="round"/></svg>
<div style="position:absolute;left:2147px;top:1334px;width:14px;height:392px;border-radius:8px;background:rgba(100,103,110,0.42);border:1px solid rgba(20,22,26,0.5)"></div>
<svg style="position:absolute;left:665px;top:1485px" width="50" height="40" viewBox="0 0 50 40" fill="none" stroke-linecap="round"><path d="M11 19 H27.5" stroke="#bdbdbd" stroke-width="4" stroke-linecap="butt"/><path d="M27 10.9 L35 18.8 L27 26.6 Z" fill="#bdbdbd"/><path d="M20.8 7.5 C17 10 16.5 15 19.5 19 C23 23.5 23.5 28 19.8 30.3" stroke="#1e1f22" stroke-width="6.5"/><path d="M20.8 7.5 C17 10 16.5 15 19.5 19 C23 23.5 23.5 28 19.8 30.3" stroke="#62a865" stroke-width="3"/></svg>
<div style="position:absolute;left:2168px;top:70px;width:2px;height:1798px;background:#1e1f22;"></div>
<div style="position:absolute;left:2170px;top:70px;width:900px;height:1798px;background:#2b2d30;"></div>
<div style="position:absolute;left:2194px;top:94.44px;height:32.4px;line-height:32.4px;font-size:27px;color:#dfe1e5;font-weight:bold;white-space:pre;font-family:'Liberation Sans', sans-serif;letter-spacing:-0.6px">Running Devices</div>
<svg style="position:absolute;left:2463px;top:94px" width="30" height="32" viewBox="0 0 30 32" fill="none" stroke-linecap="round" stroke-linejoin="round"><path d="M12 27 H4 a2 2 0 0 1 -2 -2 V4 a2 2 0 0 1 2 -2 H14 a2 2 0 0 1 2 2 V10" stroke="#ced0d6" stroke-width="2.5"/><path d="M8 6 H10" stroke="#ced0d6" stroke-width="2.5"/><rect x="12" y="14" width="15" height="10" rx="1.5" stroke="#b57ee8" stroke-width="2.5"/><path d="M11 28 H27" stroke="#b57ee8" stroke-width="2.5"/><circle cx="25" cy="27" r="4.5" fill="#5fd35f" stroke="#2b2d30" stroke-width="1.5"/></svg>
<div style="position:absolute;left:2499px;top:94.44px;height:32.4px;line-height:32.4px;font-size:27px;color:#dfe1e5;font-weight:normal;white-space:pre;font-family:'Liberation Sans', sans-serif;letter-spacing:0.3px">Pixel 8 API 33</div>
<svg style="position:absolute;left:2694px;top:103.5px" width="15" height="15" viewBox="0 0 15 15"><path d="M1 1 L14 14 M14 1 L1 14" stroke="#8c8f94" stroke-width="2.2" stroke-linecap="round"/></svg>
<div style="position:absolute;left:2170px;top:150px;width:900px;height:2px;background:#1e1f22;"></div>
<div style="position:absolute;left:2436px;top:147px;width:295px;height:5px;border-radius:3px;background:#5a5d63"></div>
<svg style="position:absolute;left:2743px;top:95px" width="28" height="28" viewBox="0 0 28 28"><path d="M14 1 V27 M1 14 H27" stroke="#ced0d6" stroke-width="2.5"/></svg>
<svg style="position:absolute;left:2910px;top:96px" width="30" height="28" viewBox="0 0 30 28"><rect x="3" y="3" width="24" height="22" fill="none" stroke="#ced0d6" stroke-width="2.5"/><rect x="3" y="3" width="24" height="6" fill="#ced0d6"/></svg>
<div style="position:absolute;left:2973px;top:97px;width:6px;height:6px;border-radius:50%;background:#ced0d6"></div>
<div style="position:absolute;left:2973px;top:107px;width:6px;height:6px;border-radius:50%;background:#ced0d6"></div>
<div style="position:absolute;left:2973px;top:117px;width:6px;height:6px;border-radius:50%;background:#ced0d6"></div>
<div style="position:absolute;left:3015px;top:109px;width:26px;height:2.5px;background:#ced0d6;"></div>
<svg style="position:absolute;left:2192px;top:166.0px" width="36" height="36" viewBox="0 0 36 36" fill="none" stroke="#ced0d6" stroke-width="2.5" stroke-linecap="round" stroke-linejoin="round"><path d="M18 5 V17"/><path d="M10 9 A12 12 0 1 0 26 9"/></svg>
<svg style="position:absolute;left:2245px;top:166.0px" width="36" height="36" viewBox="0 0 36 36" fill="none" stroke="#ced0d6" stroke-width="2.5" stroke-linecap="round" stroke-linejoin="round"><path d="M4 14 H10 L17 7 V29 L10 22 H4 Z"/><path d="M22 13 a6 6 0 0 1 0 10"/><path d="M26 9 a11 11 0 0 1 0 18"/></svg>
<svg style="position:absolute;left:2296px;top:166.0px" width="36" height="36" viewBox="0 0 36 36" fill="none" stroke="#ced0d6" stroke-width="2.5" stroke-linecap="round" stroke-linejoin="round"><path d="M4 14 H10 L17 7 V29 L10 22 H4 Z"/><path d="M22 13 a6 6 0 0 1 0 10"/></svg>
<svg style="position:absolute;left:2349px;top:166.0px" width="36" height="36" viewBox="0 0 36 36" fill="none" stroke="#ced0d6" stroke-width="2.5" stroke-linecap="round" stroke-linejoin="round"><rect x="3.5" y="6" width="15.2" height="24" rx="1.8"/><path d="M9 11 H12"/><path d="M21.7 6.5 C27 8 30.5 12 30.5 18 C30.5 24 27 28 21.7 29.3" stroke="#548af7" stroke-linecap="butt"/><path d="M28.5 6.5 H21.7 V13.5" stroke="#548af7" stroke-linecap="butt" stroke-linejoin="miter"/></svg>
<svg style="position:absolute;left:2400px;top:166.0px" width="36" height="36" viewBox="0 0 36 36" fill="none" stroke="#ced0d6" stroke-width="2.5" stroke-linecap="round" stroke-linejoin="round"><rect x="16.4" y="6" width="15.2" height="24" rx="1.8"/><path d="M22 11 H25"/><path d="M12.8 6.5 C7.5 8 4 12 4 18 C4 24 7.5 28 12.8 29.3" stroke="#548af7" stroke-linecap="butt"/><path d="M6 6.5 H12.8 V13.5" stroke="#548af7" stroke-linecap="butt" stroke-linejoin="miter"/></svg>
<svg style="position:absolute;left:2452px;top:166.0px" width="36" height="36" viewBox="0 0 36 36" fill="none" stroke="#ced0d6" stroke-width="2.5" stroke-linecap="round" stroke-linejoin="round"><path d="M24 9 L10 18 L24 27 Z"/></svg>
<svg style="position:absolute;left:2504px;top:166.0px" width="36" height="36" viewBox="0 0 36 36" fill="none" stroke="#ced0d6" stroke-width="2.5" stroke-linecap="round" stroke-linejoin="round"><circle cx="18" cy="18" r="9.5"/></svg>
<svg style="position:absolute;left:2556px;top:166.0px" width="36" height="36" viewBox="0 0 36 36" fill="none" stroke="#ced0d6" stroke-width="2.5" stroke-linecap="round" stroke-linejoin="round"><rect x="10" y="10" width="15.5" height="15.5" rx="1.2"/></svg>
<svg style="position:absolute;left:2608px;top:166.0px" width="36" height="36" viewBox="0 0 36 36" fill="none" stroke="#ced0d6" stroke-width="2.5" stroke-linecap="round" stroke-linejoin="round"><path d="M4 12 a2 2 0 0 1 2 -2 H11 L13 6 H23 L25 10 H30 a2 2 0 0 1 2 2 V28 a2 2 0 0 1 -2 2 H6 a2 2 0 0 1 -2 -2 Z"/><circle cx="18" cy="19" r="5.5"/><circle cx="28" cy="14" r="0.5"/></svg>
<svg style="position:absolute;left:2660px;top:166.0px" width="36" height="36" viewBox="0 0 36 36" fill="none" stroke="#ced0d6" stroke-width="2.5" stroke-linecap="round" stroke-linejoin="round"><rect x="3" y="9" width="22" height="19" rx="1.5"/><path d="M25 16 L33 10 V27 L25 21"/></svg>
<svg style="position:absolute;left:2730px;top:166.0px" width="28" height="36" viewBox="0 0 28 36" fill="none" stroke="#ced0d6" stroke-width="2.5" stroke-linecap="round" stroke-linejoin="round"><path d="M10 10 L18 18 L10 26"/></svg>
<svg style="position:absolute;left:2797px;top:166.0px" width="36" height="36" viewBox="0 0 36 36" fill="none" stroke="#ced0d6" stroke-width="2.5" stroke-linecap="round" stroke-linejoin="round"><path d="M3.5 18 V8.5 a1.5 1.5 0 0 1 1.5 -1.5 H25"/><path d="M15 25.5 H9 a1.5 1.5 0 0 1 -1.5 -1.5 V12.5 a1.5 1.5 0 0 1 1.5 -1.5 H25 a1.5 1.5 0 0 1 1.5 1.5 V16"/><circle cx="23" cy="23.5" r="5"/><path d="M26.8 27.3 L31 31.5"/></svg>
<div style="position:absolute;left:2846px;top:164px;width:2px;height:40px;background:#43454a;"></div>
<svg style="position:absolute;left:2869px;top:174px" width="26" height="22" viewBox="0 0 26 22"><path d="M2 11 L9 18 L24 3" fill="none" stroke="#5f9e62" stroke-width="3.2" stroke-linecap="round" stroke-linejoin="round"/></svg>
<div style="position:absolute;left:2902px;top:169.44px;height:32.4px;line-height:32.4px;font-size:27px;color:#dfe1e5;font-weight:normal;white-space:pre;font-family:'Liberation Sans', sans-serif;letter-spacing:1.2px">Up-to-date</div>
<div style="position:absolute;left:2170px;top:216px;width:900px;height:2px;background:#1e1f22;"></div>
<div style="position:absolute;left:3001px;top:658px;width:8px;height:106px;border-radius:2px 4px 4px 2px;background:linear-gradient(90deg,#3a3a3a,#777 40%,#5a5a5a 80%,#222)"></div>
<div style="position:absolute;left:3001px;top:855px;width:8px;height:217px;border-radius:2px 4px 4px 2px;background:linear-gradient(90deg,#3a3a3a,#777 40%,#5a5a5a 80%,#222)"></div>
<div style="position:absolute;left:2231px;top:219px;width:772px;height:1646px;border-radius:96px;background:#484848"></div>
<div style="position:absolute;left:2235px;top:223px;width:764px;height:1638px;border-radius:92px;background:#2a2a2a"></div>
<div style="position:absolute;left:2238px;top:226px;width:758px;height:1632px;border-radius:89px;background:#6c6c6c"></div>
<div style="position:absolute;left:2241px;top:229px;width:752px;height:1626px;border-radius:86px;background:#4a4a4a"></div>
<div style="position:absolute;left:2244px;top:232px;width:746px;height:1620px;border-radius:83px;background:#323232"></div>
<div style="position:absolute;left:2247px;top:235px;width:740px;height:1614px;border-radius:80px;background:#050505"></div>
<div style="position:absolute;left:2263px;top:254px;width:708px;height:1534px;border-radius:56px 56px 6px 6px;background:#fdf9ff;overflow:hidden"><div style="position:absolute;left:0;top:0;width:708px;height:41px;background:#4a5b8e"></div></div>
<div style="position:absolute;left:2280px;top:261.23px;height:27.599999999999998px;line-height:27.599999999999998px;font-size:23px;color:#ffffff;font-weight:normal;white-space:pre;font-family:'Liberation Sans', sans-serif;letter-spacing:-0.3px">1:56</div>
<svg style="position:absolute;left:2331px;top:263px" width="24" height="24" viewBox="0 0 24 24"><path fill="#ffffff" d="M19.4 13c.04-.32.06-.66.06-1s-.02-.68-.06-1l2.1-1.65a.5.5 0 0 0 .12-.64l-2-3.46a.5.5 0 0 0-.6-.22l-2.5 1a7.3 7.3 0 0 0-1.7-1l-.4-2.65A.5.5 0 0 0 14 2h-4a.5.5 0 0 0-.5.42l-.37 2.65a7.3 7.3 0 0 0-1.7 1l-2.5-1a.5.5 0 0 0-.6.22l-2 3.46a.5.5 0 0 0 .12.64L4.6 11c-.04.32-.07.66-.07 1s.03.68.07 1l-2.1 1.65a.5.5 0 0 0-.12.64l2 3.46a.5.5 0 0 0 .6.22l2.5-1c.52.4 1.08.73 1.7 1l.37 2.65A.5.5 0 0 0 10 22h4a.5.5 0 0 0 .5-.42l.37-2.65a7.3 7.3 0 0 0 1.7-1l2.5 1a.5.5 0 0 0 .6-.22l2-3.46a.5.5 0 0 0-.12-.64L19.4 13zM12 15.5a3.5 3.5 0 1 1 0-7 3.5 3.5 0 0 1 0 7z"/></svg>
<svg style="position:absolute;left:2370px;top:262px" width="22" height="26" viewBox="0 0 22 26"><path d="M11 1 L21 5 V12 C21 18 16.5 23 11 25 C5.5 23 1 18 1 12 V5 Z" fill="#ffffff"/><path d="M8.5 8 L15.5 12.5 L8.5 17 Z" fill="#4a5b8e"/></svg>
<svg style="position:absolute;left:2411px;top:265px" width="18" height="22" viewBox="0 0 18 22" fill="none" stroke="#ffffff" stroke-width="2"><circle cx="9" cy="4" r="2.5"/><path d="M3 12 L9 18 L15 12"/><path d="M6 12 L9 15 L12 12"/></svg>
<svg style="position:absolute;left:2450px;top:264px" width="20" height="24" viewBox="0 0 20 24"><path d="M6 1 H18 a1.5 1.5 0 0 1 1.5 1.5 V21.5 a1.5 1.5 0 0 1 -1.5 1.5 H2 a1.5 1.5 0 0 1 -1.5 -1.5 V6.5 Z" fill="#ffffff"/><path d="M9 3 V7 M12 3 V7 M15 3 V7" stroke="#4a5b8e" stroke-width="1.3"/></svg>
<svg style="position:absolute;left:2847px;top:263px" width="28" height="22" viewBox="0 0 28 22"><path d="M1 6 C9 -1 19 -1 27 6 L14 21 Z" fill="#ffffff"/></svg>
<svg style="position:absolute;left:2876px;top:262px" width="22" height="22" viewBox="0 0 22 22"><path d="M21 1 V21 H1 Z" fill="#ffffff"/></svg>
<div style="position:absolute;left:2910px;top:263px;width:14px;height:21px;background:repeating-linear-gradient(#ffffff 0 1.2px, transparent 1.2px 2.2px)"></div>
<div style="position:absolute;left:2277px;top:309px;width:544px;height:97px;border-radius:7px 7px 0 0;background:#e1e2ec"></div>
<div style="position:absolute;left:2277px;top:403px;width:544px;height:3px;background:#4a5b8e;"></div>
<div style="position:absolute;left:2305px;top:325.12px;height:25.2px;line-height:25.2px;font-size:21px;color:#4a5b8e;font-weight:normal;white-space:pre;font-family:'Liberation Sans', sans-serif;letter-spacing:0.3px">Text to summarize</div>
<div style="position:absolute;left:2305px;top:357.47px;height:33.0px;line-height:33.0px;font-size:27.5px;color:#1b1b1f;font-weight:normal;white-space:pre;font-family:'Liberation Sans', sans-serif;letter-spacing:0.6px">Repeat for me: one, two, three</div>
<div style="position:absolute;left:2874px;top:345.34px;height:30.0px;line-height:30.0px;font-size:25px;color:#4a5b8e;font-weight:normal;white-space:pre;font-family:'Liberation Sans', sans-serif;letter-spacing:0px;-webkit-text-stroke:0.5px #4a5b8e">Go</div>
<svg style="position:absolute;left:2294px;top:424px" width="34" height="32" viewBox="0 0 34 32" fill="none" stroke="#1b1b1f" stroke-width="3.2"><circle cx="17" cy="8" r="5.5"/><path d="M4 29 V26 C4 21 11 19 17 19 C23 19 30 21 30 26 V29 Z"/></svg>
<div style="position:absolute;left:2347px;top:424.44px;height:32.4px;line-height:32.4px;font-size:27px;color:#1b1b1f;font-weight:normal;white-space:pre;font-family:'Liberation Sans', sans-serif;letter-spacing:0.5px">1, 2, 3</div>
<div style="position:absolute;left:2523px;top:1804px;width:187px;height:8px;border-radius:4px;background:#e6e6e6"></div>
<div style="position:absolute;left:2983px;top:1613px;width:52px;height:212px;border-radius:8px;background:#2b2d30;border:1.5px solid #393b40"></div>
<svg style="position:absolute;left:2996px;top:1629px" width="26" height="26" viewBox="0 0 26 26"><path d="M13 1 V25 M1 13 H25" stroke="#ced0d6" stroke-width="2.2"/></svg>
<div style="position:absolute;left:2996px;top:1692px;width:26px;height:2px;background:#5a5d63;"></div>
<div style="position:absolute;left:2993px;top:1734.18px;height:26.4px;line-height:26.4px;font-size:22px;color:#ced0d6;font-weight:bold;white-space:pre;font-family:'Liberation Sans', sans-serif;letter-spacing:-1px">1:1</div>
<svg style="position:absolute;left:2996px;top:1784px" width="26" height="26" viewBox="0 0 26 26" fill="none" stroke="#5a5d63" stroke-width="2"><rect x="1" y="1" width="24" height="24" rx="3"/><path d="M6 12 V6 H12 M20 14 V20 H14"/></svg>
<div style="position:absolute;left:2596px;top:276px;width:43px;height:43px;border-radius:50%;background:#050505"></div>
<div style="position:absolute;left:2610px;top:290px;width:15px;height:15px;border-radius:50%;background:radial-gradient(circle at 45% 45%, #3b4a66 0%, #1c2233 60%, #0a0a0a 100%)"></div>
<div style="position:absolute;left:3070px;top:70px;width:2px;height:1798px;background:#1e1f22;"></div>
<div style="position:absolute;left:3072px;top:70px;width:82px;height:1798px;background:#2b2d30;"></div>
<svg style="position:absolute;left:3090.0px;top:88.0px" width="44" height="44" viewBox="0 0 44 44" fill="none" stroke="#ced0d6" stroke-width="3" stroke-linecap="round" stroke-linejoin="round"><path d="M8 32 C11 28 11 24 11 18 a11 11 0 0 1 22 0 C33 24 33 28 36 32 Z"/><path d="M18 37 H26"/><circle cx="35" cy="8" r="6" fill="#548af7" stroke="none"/></svg>
<svg style="position:absolute;left:3085.0px;top:165.0px" width="55.0" height="50.0" viewBox="0 0 55 50" fill="none" stroke="#ced0d6" stroke-width="2.60" stroke-linecap="round" stroke-linejoin="round"><path d="M8 39 C7.5 29 11 22 15 19 C19 16 24 15.5 28 16.5 C33 17.5 37 20 40 20.5 C43 21 45.5 18 45.5 15 C45.5 12 43 10.5 40.5 11 C39 11.3 37.5 12 36.6 13"/><path d="M42 20.5 C41 24 38 27 37 30 C35.8 33 35.5 36 35.5 39"/><path d="M8 39 H12 C13 35.5 16 34.5 17.5 35.2 C19 36 20 37 21 39 H23.5 C24.5 35.5 27 34.5 28.5 35.2 C30 36 31 37 31.5 39 H35.5"/><path d="M15.5 19.5 C16 24 17 28.5 19.5 29 C22 29.5 24.5 26.5 26 24.5"/><circle cx="32" cy="24" r="1.4" fill="#ced0d6" stroke="none"/></svg>
<svg style="position:absolute;left:3090.0px;top:249.0px" width="44" height="44" viewBox="0 0 44 44" fill="none" stroke="#ced0d6" stroke-width="3" stroke-linecap="round" stroke-linejoin="round"><path d="M18 36 H9 a2 2 0 0 1 -2 -2 V8 a2 2 0 0 1 2 -2 H25 a2 2 0 0 1 2 2 V18"/><path d="M14 11 H19"/><path d="M20 37 a11 9 0 0 1 22 0 Z"/><path d="M23 27 L20 23 M39 27 L42 23"/></svg>
<div style="position:absolute;left:3082px;top:320px;width:60px;height:60px;border-radius:11px;background:#43454a"></div>
<svg style="position:absolute;left:3090.0px;top:328.0px" width="44" height="44" viewBox="0 0 44 44" fill="none" stroke="#ced0d6" stroke-width="3" stroke-linecap="round" stroke-linejoin="round"><path d="M15 35 H9 a2 2 0 0 1 -2 -2 V9 a2 2 0 0 1 2 -2 H25 a2 2 0 0 1 2 2 V18"/><path d="M14 11 H19"/><rect x="19" y="22" width="18" height="12" rx="1"/><path d="M17 37 H38"/><circle cx="34" cy="34" r="5.5" fill="#5fd35f" stroke="#43454a" stroke-width="1.5"/></svg>
<svg style="position:absolute;left:3090px;top:410px" width="44" height="44" viewBox="0 0 44 44" fill="none" stroke-linecap="round" stroke-linejoin="round"><path d="M5 27 a13.5 12 0 0 1 27 0 Z" stroke="#ced0d6" stroke-width="2.8"/><path d="M10 15.5 L7 10.5 M27 15.5 L30 10.5" stroke="#ced0d6" stroke-width="2.8"/><circle cx="13" cy="21" r="1.3" fill="#ced0d6"/><circle cx="24" cy="21" r="1.3" fill="#ced0d6"/><path d="M32.5 18 Q34 25.5 41.5 27 Q34 28.5 32.5 36 Q31 28.5 23.5 27 Q31 25.5 32.5 18 Z" fill="#ced0d6" stroke="#2b2d30" stroke-width="3.5" paint-order="stroke"/></svg>
<div style="position:absolute;left:0px;top:1867px;width:3154px;height:2px;background:#1e1f22;"></div>
<div style="position:absolute;left:0px;top:1869px;width:3154px;height:55px;background:#2b2d30;"></div>
<div style="position:absolute;left:20px;top:1888px;width:11px;height:11px;border:2.5px solid #548af7;border-radius:3px;background:#25324d"></div>
<div style="position:absolute;left:44px;top:1880.44px;height:32.4px;line-height:32.4px;font-size:27px;color:#a8abb0;font-weight:normal;white-space:pre;font-family:'Liberation Sans', sans-serif;letter-spacing:-0.4px">GeminiAPI</div>
<svg style="position:absolute;left:188px;top:1885px" width="12" height="20" viewBox="0 0 12 20"><path d="M2 2 L10 10 L2 18" fill="none" stroke="#a8abb0" stroke-width="2.3" stroke-linecap="round" stroke-linejoin="round"/></svg>
<div style="position:absolute;left:217px;top:1888px;width:11px;height:11px;border:2.5px solid #548af7;border-radius:3px;background:#25324d"></div>
<div style="position:absolute;left:241px;top:1880.44px;height:32.4px;line-height:32.4px;font-size:27px;color:#a8abb0;font-weight:normal;white-space:pre;font-family:'Liberation Sans', sans-serif;">app</div>
<svg style="position:absolute;left:309px;top:1885px" width="12" height="20" viewBox="0 0 12 20"><path d="M2 2 L10 10 L2 18" fill="none" stroke="#a8abb0" stroke-width="2.3" stroke-linecap="round" stroke-linejoin="round"/></svg>
<div style="position:absolute;left:338px;top:1880.44px;height:32.4px;line-height:32.4px;font-size:27px;color:#a8abb0;font-weight:normal;white-space:pre;font-family:'Liberation Sans', sans-serif;">src</div>
<svg style="position:absolute;left:396px;top:1885px" width="12" height="20" viewBox="0 0 12 20"><path d="M2 2 L10 10 L2 18" fill="none" stroke="#a8abb0" stroke-width="2.3" stroke-linecap="round" stroke-linejoin="round"/></svg>
<div style="position:absolute;left:423px;top:1888px;width:11px;height:11px;border:2.5px solid #548af7;border-radius:3px;background:#25324d"></div>
<div style="position:absolute;left:447px;top:1880.44px;height:32.4px;line-height:32.4px;font-size:27px;color:#a8abb0;font-weight:normal;white-space:pre;font-family:'Liberation Sans', sans-serif;">main</div>
<svg style="position:absolute;left:527px;top:1885px" width="12" height="20" viewBox="0 0 12 20"><path d="M2 2 L10 10 L2 18" fill="none" stroke="#a8abb0" stroke-width="2.3" stroke-linecap="round" stroke-linejoin="round"/></svg>
<div style="position:absolute;left:556px;top:1880.44px;height:32.4px;line-height:32.4px;font-size:27px;color:#a8abb0;font-weight:normal;white-space:pre;font-family:'Liberation Sans', sans-serif;">java</div>
<svg style="position:absolute;left:625px;top:1885px" width="12" height="20" viewBox="0 0 12 20"><path d="M2 2 L10 10 L2 18" fill="none" stroke="#a8abb0" stroke-width="2.3" stroke-linecap="round" stroke-linejoin="round"/></svg>
<div style="position:absolute;left:654px;top:1880.44px;height:32.4px;line-height:32.4px;font-size:27px;color:#a8abb0;font-weight:normal;white-space:pre;font-family:'Liberation Sans', sans-serif;">com</div>
<svg style="position:absolute;left:727px;top:1885px" width="12" height="20" viewBox="0 0 12 20"><path d="M2 2 L10 10 L2 18" fill="none" stroke="#a8abb0" stroke-width="2.3" stroke-linecap="round" stroke-linejoin="round"/></svg>
<div style="position:absolute;left:756px;top:1880.44px;height:32.4px;line-height:32.4px;font-size:27px;color:#a8abb0;font-weight:normal;white-space:pre;font-family:'Liberation Sans', sans-serif;">example</div>
<svg style="position:absolute;left:874px;top:1885px" width="12" height="20" viewBox="0 0 12 20"><path d="M2 2 L10 10 L2 18" fill="none" stroke="#a8abb0" stroke-width="2.3" stroke-linecap="round" stroke-linejoin="round"/></svg>
<div style="position:absolute;left:908px;top:1880.44px;height:32.4px;line-height:32.4px;font-size:27px;color:#a8abb0;font-weight:normal;white-space:pre;font-family:'Liberation Sans', sans-serif;">geminiapi</div>
<svg style="position:absolute;left:1045px;top:1885px" width="12" height="20" viewBox="0 0 12 20"><path d="M2 2 L10 10 L2 18" fill="none" stroke="#a8abb0" stroke-width="2.3" stroke-linecap="round" stroke-linejoin="round"/></svg>
<svg style="position:absolute;left:1077px;top:1882px" width="28" height="28" viewBox="0 0 30 30" fill="none" stroke-linejoin="round"><path d="M3 3 H27 L16 15 L27 27 H3 Z" fill="#2f2a3a" stroke="#b57ee8" stroke-width="2.5"/></svg>
<div style="position:absolute;left:1114px;top:1880.44px;height:32.4px;line-height:32.4px;font-size:27px;color:#a8abb0;font-weight:normal;white-space:pre;font-family:'Liberation Sans', sans-serif;">MainActivity.kt</div>
<svg style="position:absolute;left:1318px;top:1885px" width="12" height="20" viewBox="0 0 12 20"><path d="M2 2 L10 10 L2 18" fill="none" stroke="#a8abb0" stroke-width="2.3" stroke-linecap="round" stroke-linejoin="round"/></svg>
<svg style="position:absolute;left:1347px;top:1880px" width="32" height="32" viewBox="0 0 34 34" fill="none" stroke-linejoin="round"><circle cx="14" cy="14" r="12" fill="#25324d" stroke="#548af7" stroke-width="2.4"/><path d="M18 10.5 A5 5 0 1 0 18 17.5" stroke="#548af7" stroke-width="2.4"/><path d="M17 18 H31 L25.5 24.5 L31 31 H17 Z" fill="#2f2a3a" stroke="#b57ee8" stroke-width="2.4"/></svg>
<div style="position:absolute;left:1385px;top:1880.44px;height:32.4px;line-height:32.4px;font-size:27px;color:#a8abb0;font-weight:normal;white-space:pre;font-family:'Liberation Sans', sans-serif;">MainActivity</div>
<svg style="position:absolute;left:1556px;top:1885px" width="12" height="20" viewBox="0 0 12 20"><path d="M2 2 L10 10 L2 18" fill="none" stroke="#a8abb0" stroke-width="2.3" stroke-linecap="round" stroke-linejoin="round"/></svg>
<svg style="position:absolute;left:1588px;top:1882px" width="28" height="28" viewBox="0 0 28 28" fill="none"><circle cx="14" cy="14" r="11.5" stroke="#e05555" stroke-width="2.4"/><path d="M8.5 19 V10 a2 2 0 0 1 4 0 V19 M12.5 10 a2 2 0 0 1 4 0 V19" stroke="#e05555" stroke-width="2"/></svg>
<div style="position:absolute;left:1625px;top:1880.44px;height:32.4px;line-height:32.4px;font-size:27px;color:#a8abb0;font-weight:normal;white-space:pre;font-family:'Liberation Sans', sans-serif;">onCreate</div>
<div style="position:absolute;left:2283px;top:1880.44px;height:32.4px;line-height:32.4px;font-size:27px;color:#a8abb0;font-weight:normal;white-space:pre;font-family:'Liberation Sans', sans-serif;letter-spacing:0.15px">50:52 (140 chars, 2 line breaks)</div>
<div style="position:absolute;left:2703px;top:1880.44px;height:32.4px;line-height:32.4px;font-size:27px;color:#a8abb0;font-weight:normal;white-space:pre;font-family:'Liberation Sans', sans-serif;">LF</div>
<div style="position:absolute;left:2765px;top:1880.44px;height:32.4px;line-height:32.4px;font-size:27px;color:#a8abb0;font-weight:normal;white-space:pre;font-family:'Liberation Sans', sans-serif;">UTF-8</div>
<svg style="position:absolute;left:2877px;top:1882px" width="30" height="30" viewBox="0 0 30 30" fill="none" stroke="#a8abb0" stroke-width="2.4" stroke-linejoin="round"><path d="M3 3 H27 V22 H20 L26 28 L14 22 H3 Z"/><path d="M15 8 V14"/><circle cx="15" cy="18" r="0.6"/></svg>
<div style="position:absolute;left:2941px;top:1880.44px;height:32.4px;line-height:32.4px;font-size:27px;color:#a8abb0;font-weight:normal;white-space:pre;font-family:'Liberation Sans', sans-serif;">4 spaces</div>
<svg style="position:absolute;left:3088px;top:1880px" width="32" height="32" viewBox="0 0 32 32" fill="none" stroke="#dfe1e5" stroke-width="2.4" stroke-linecap="round"><rect x="3" y="14" width="18" height="15" rx="2"/><path d="M16 14 V9 a5 5 0 0 1 10 0 V11"/><path d="M12 19 V23"/></svg>
<div style="position:absolute;left:3150px;top:0px;width:2px;height:1924px;background:#4e4f52;"></div>
<div style="position:absolute;left:3152px;top:0px;width:1px;height:1924px;background:#0c0c0c;"></div>
<div style="position:absolute;left:3153px;top:0;width:1px;height:1924px;background:linear-gradient(#e9cdbd 0%, #d9c7c0 60%, #b9b9bb 100%)"></div>
<svg style="position:absolute;left:3136px;top:1906px" width="18" height="18" viewBox="0 0 18 18"><path d="M18 0 V18 H0 C9 18 17 15 17 0 Z" fill="#b5b5b7"/><path d="M16 0 C16 11 11 16.5 0 17" fill="none" stroke="#141414" stroke-width="1.6"/><path d="M14.8 0 C14.8 10 10 15.5 0 15.8" fill="none" stroke="#4e4f52" stroke-width="1.3"/></svg>
</body></html>
